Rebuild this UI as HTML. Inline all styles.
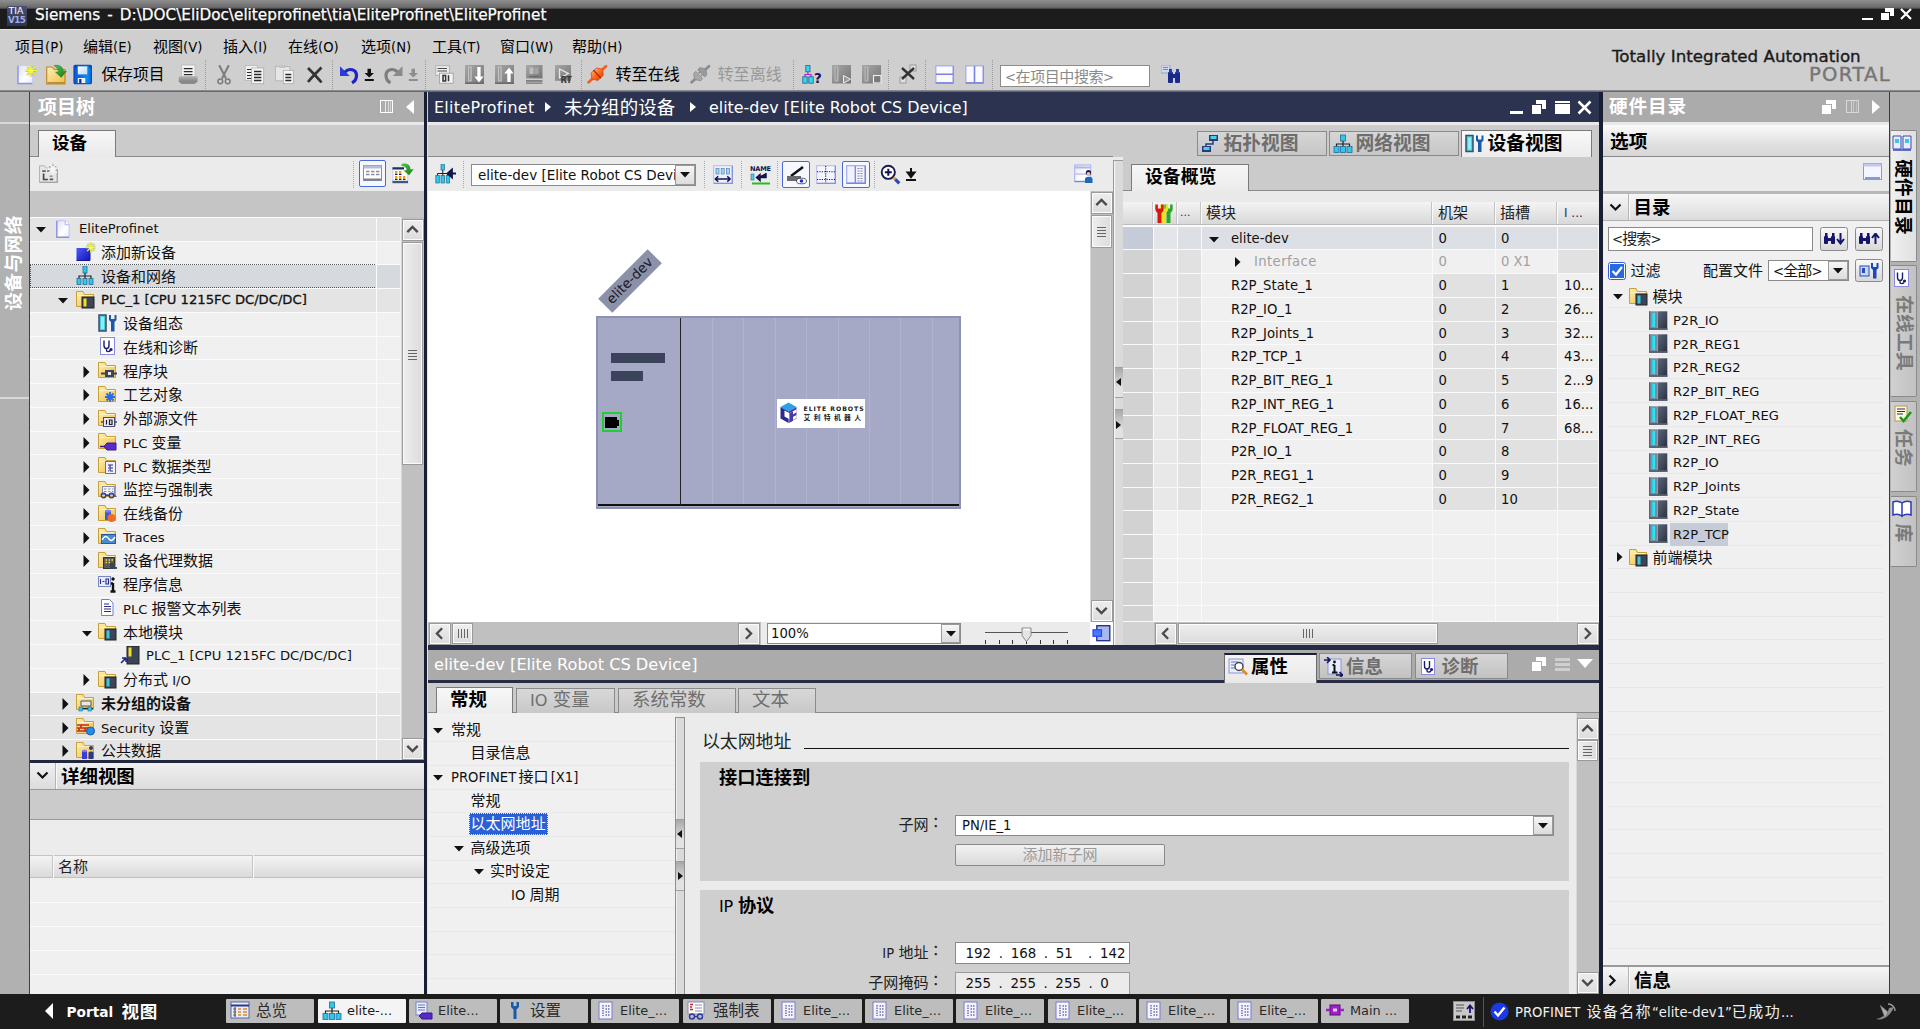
<!DOCTYPE html>
<html lang="zh-CN"><head><meta charset="utf-8"><title>Siemens - EliteProfinet</title>
<style>
html,body{margin:0;padding:0}
body{width:1920px;height:1029px;overflow:hidden;position:relative;background:#cfcfcf;
font-family:"DejaVu Sans","Liberation Sans","Noto Sans CJK SC",sans-serif;font-size:13.2px;color:#000}
div,svg{position:absolute;box-sizing:border-box}
.t{white-space:pre}
.c{font-size:1.14em}
span{position:static}
</style></head><body>
<svg width="0" height="0" style="left:0;top:0"><defs><linearGradient id="fg" x1="0" y1="0" x2="1" y2="1"><stop offset="0" stop-color="#fdeeb0"/><stop offset="1" stop-color="#efbf4a"/></linearGradient><linearGradient id="gg" x1="0" y1="0" x2="0" y2="1"><stop offset="0" stop-color="#b4b4b4"/><stop offset="1" stop-color="#7c7c7c"/></linearGradient><linearGradient id="bg" x1="0" y1="0" x2="1" y2="1"><stop offset="0" stop-color="#dfe0ff"/><stop offset=".6" stop-color="#ffffff"/><stop offset="1" stop-color="#e8e8ff"/></linearGradient><linearGradient id="gr" x1="0" y1="0" x2="1" y2="1"><stop offset="0" stop-color="#52c452"/><stop offset="1" stop-color="#167816"/></linearGradient><linearGradient id="sv" x1="0" y1="0" x2="1" y2="0"><stop offset="0" stop-color="#0a55d4"/><stop offset=".75" stop-color="#0a8cf0"/><stop offset="1" stop-color="#0a68dc"/></linearGradient><linearGradient id="sl" x1="0" y1="0" x2="1" y2="1"><stop offset="0" stop-color="#ffffff"/><stop offset="1" stop-color="#b8d8f4"/></linearGradient><linearGradient id="gg2" x1="0" y1="0" x2="1" y2="1"><stop offset="0" stop-color="#a8a8a8"/><stop offset="1" stop-color="#747474"/></linearGradient><linearGradient id="og" x1="0" y1="0" x2="0" y2="1"><stop offset="0" stop-color="#ffa060"/><stop offset=".5" stop-color="#ff6a1e"/><stop offset="1" stop-color="#e84a0a"/></linearGradient><linearGradient id="md" x1="0" y1="0" x2="1" y2="1"><stop offset="0" stop-color="#5c657a"/><stop offset="1" stop-color="#2a3140"/></linearGradient><linearGradient id="ad" x1="0" y1="0" x2="1" y2="1"><stop offset="0" stop-color="#4a5af8"/><stop offset="1" stop-color="#1414b8"/></linearGradient></defs></svg>

<div style="left:0px;top:0px;width:1920px;height:29px;background:linear-gradient(#8e8e8e 0,#808080 3px,#6c6c6c 7px,#565656 8.2px,#1c1c1c 9.4px,#1c1c1c 100%)"></div>
<div style="left:7px;top:6px;width:20px;height:20px;background:linear-gradient(#4a5072,#2c3350);overflow:hidden"></div>
<div class="t" style="left:8.5px;top:6.300000000000001px;height:10px;line-height:10px;font-size:9.3px;color:#fff;letter-spacing:0px">TIA</div>
<div class="t" style="left:8px;top:15.3px;height:10px;line-height:10px;font-size:8.8px;color:#9fb0e8;font-weight:bold;letter-spacing:-0.6px">V15</div>
<div class="t" style="left:35px;top:2.5px;height:24px;line-height:24px;font-size:15.25px;color:#fff;word-spacing:2.2px;-webkit-text-stroke:0.25px #fff">Siemens - D:\DOC\EliDoc\eliteprofinet\tia\EliteProfinet\EliteProfinet</div>
<div style="left:1862px;top:18px;width:11px;height:2px;background:#fff"></div>
<div style="left:1885px;top:8px;width:9px;height:8px;background:#fff"></div>
<div style="left:1881px;top:12px;width:9px;height:8px;background:#fff;border:1px solid #1c1c1c;border-width:1px 1px 0 0"></div>
<svg style="left:1900px;top:8px;" width="12" height="12" viewBox="0 0 12 12"><path d="M1 1 L11 11 M11 1 L1 11" stroke="#fff" stroke-width="2.2"/></svg>
<div style="left:0px;top:29px;width:1920px;height:1px;background:#e4e4e4"></div>
<div class="t" style="left:15px;top:34.8px;height:24px;line-height:24px;font-size:13.2px;color:#000;"><span class="c">项目</span>(P)</div>
<div class="t" style="left:83px;top:34.8px;height:24px;line-height:24px;font-size:13.2px;color:#000;"><span class="c">编辑</span>(E)</div>
<div class="t" style="left:153px;top:34.8px;height:24px;line-height:24px;font-size:13.2px;color:#000;"><span class="c">视图</span>(V)</div>
<div class="t" style="left:223px;top:34.8px;height:24px;line-height:24px;font-size:13.2px;color:#000;"><span class="c">插入</span>(I)</div>
<div class="t" style="left:288px;top:34.8px;height:24px;line-height:24px;font-size:13.2px;color:#000;"><span class="c">在线</span>(O)</div>
<div class="t" style="left:361px;top:34.8px;height:24px;line-height:24px;font-size:13.2px;color:#000;"><span class="c">选项</span>(N)</div>
<div class="t" style="left:432px;top:34.8px;height:24px;line-height:24px;font-size:13.2px;color:#000;"><span class="c">工具</span>(T)</div>
<div class="t" style="left:500px;top:34.8px;height:24px;line-height:24px;font-size:13.2px;color:#000;"><span class="c">窗口</span>(W)</div>
<div class="t" style="left:572px;top:34.8px;height:24px;line-height:24px;font-size:13.2px;color:#000;"><span class="c">帮助</span>(H)</div>
<div class="t" style="left:1612px;top:43.8px;height:24px;line-height:24px;font-size:16.7px;color:#1a1a1a;-webkit-text-stroke:0.35px #1a1a1a">Totally Integrated Automation</div>
<div class="t" style="left:1809px;top:62.5px;height:24px;line-height:24px;font-size:19.6px;color:#757575;letter-spacing:1.3px;-webkit-text-stroke:0.4px #757575">PORTAL</div>
<svg style="left:17px;top:64px;" width="20" height="21" viewBox="0 0 20 21"><path d="M1 1.500h14.500v18H1z" fill="url(#bg)"/><path d="M1 1.500v18h14.500" fill="none" stroke="#8c90ea" stroke-width="1.400"/><path d="M1 1.500h14.500v18" fill="none" stroke="#c4c8f8" stroke-width=".8"/><g stroke="#3a6ab0" stroke-width="2.200" opacity=".55"><path d="M14 1v11.500M8.300 6.800h11.400M10 2.700l8 8.200M18 2.700l-8 8.200"/></g><g stroke="#f6f63a" stroke-width="1.500"><path d="M14 .8v12M8 6.800h12M9.800 2.600l8.400 8.400M18.200 2.600l-8.400 8.400"/></g><circle cx="14" cy="6.800" r="2.300" fill="#f8f840"/></svg>
<svg style="left:46px;top:64px;" width="21" height="21" viewBox="0 0 21 21"><path d="M.7 3h5.500l2.300 2.500h10.500v14.300H.7z" fill="url(#fg)" stroke="#c08c2c" stroke-width="1.200"/><path d="M1.500 18.800h17" stroke="#b8842a" stroke-width="1.400"/><path d="M8 1.500c6-1 9 1.500 9.500 6l2.800-.3-5 6.200-5.800-5.200 3 -.3c-.3-2.500-1.700-4.500-4.500-6.400z" fill="url(#gr)" stroke="#1c7a1c" stroke-width=".5"/></svg>
<svg style="left:73px;top:64px;" width="20" height="21" viewBox="0 0 20 21"><rect x="1" y="1.200" width="17.400" height="18.600" rx="1" fill="url(#sv)" stroke="#0a44b0" stroke-width="1.100"/><rect x="4.800" y="2.400" width="9.500" height="8" fill="url(#sl)"/><rect x="4.800" y="14" width="7.500" height="5" fill="#eef0f8"/><rect x="6.200" y="15" width="2.200" height="4" fill="#0a2a90"/><rect x="2" y="2.200" width="1.200" height="1.200" fill="#062a70"/><rect x="16" y="2.200" width="1.200" height="1.200" fill="#062a70"/></svg>
<div class="t" style="left:101.5px;top:62.599999999999994px;height:24px;line-height:24px;font-size:13.85px;color:#000;"><span class="c">保存项目</span></div>
<svg style="left:178px;top:64px;" width="21" height="21" viewBox="0 0 21 21"><rect x="3.700" y="1" width="13.300" height="11.500" fill="#f4f4f4" stroke="#b8b8b8" stroke-width=".8"/><path d="M5.800 4.700h8.700M5.800 7.700h8.700M5.800 10.600h8.700" stroke="#2a2a2a" stroke-width="1.300"/><rect x=".8" y="12.200" width="18.700" height="6.300" rx="1" fill="url(#gg)"/><rect x="2.800" y="18.400" width="14.600" height="1.400" fill="#7a7a7a"/></svg>
<div style="left:205px;top:60px;width:1px;height:29px;border-left:1px dotted #9a9a9a"></div>
<svg style="left:215px;top:64px;" width="18" height="21" viewBox="0 0 18 21"><g stroke="#7c7c7c" fill="none"><path d="M4.200 1.200L11 14.500M13.800 1.200L7 14.500" stroke-width="2"/><circle cx="5.300" cy="17.300" r="2.400" stroke-width="1.500"/><circle cx="12.700" cy="17.300" r="2.400" stroke-width="1.500"/></g></svg>
<svg style="left:244px;top:64px;" width="21" height="21" viewBox="0 0 21 21"><rect x="1.200" y="1.400" width="12.300" height="15" fill="#f0f0f0" stroke="#b4b4b4" stroke-width=".8"/><path d="M3 5.500h5M3 8.500h5M3 11.500h5M3 14.500h5" stroke="#2a2a2a" stroke-width="1"/><rect x="7.700" y="4" width="12" height="15.700" fill="#f6f6f6" stroke="#aaa" stroke-width=".8"/><path d="M10 7.500h7.400M10 10.500h7.400M10 13.500h7.400M10 16.500h7.400" stroke="#2a2a2a" stroke-width="1.300"/></svg>
<svg style="left:274px;top:64px;" width="21" height="21" viewBox="0 0 21 21"><rect x="1.400" y="2.500" width="14.500" height="14.300" fill="#e6e6e6" stroke="#b0b0b0" stroke-width=".8"/><rect x="5" y="1" width="7" height="3" rx="1" fill="#c4c4c4"/><rect x="9.300" y="6.400" width="10" height="13.300" fill="#f6f6f6" stroke="#aaa" stroke-width=".8"/><path d="M11.300 10.500h6M11.300 13.500h6M11.300 16.500h6" stroke="#2a2a2a" stroke-width="1.300"/></svg>
<svg style="left:306px;top:65px;" width="18" height="19" viewBox="0 0 18 19"><path d="M2 3c4 4 9 9 13.500 14.500M15.500 2.500C11 7 6.500 11.500 2 17" stroke="#333" stroke-width="2.700" fill="none"/></svg>
<div style="left:332px;top:60px;width:1px;height:29px;border-left:1px dotted #9a9a9a"></div>
<svg style="left:339px;top:64px;" width="22" height="21" viewBox="0 0 22 21"><path d="M1 2.200v9.700h9.700z" fill="#2a3ae0"/><path d="M6 8c4-4.500 11.500-2.500 11.500 3.500 0 3.500-2 6-4.500 7.300" fill="none" stroke="#1c26c8" stroke-width="3.200"/></svg>
<svg style="left:364px;top:68px;" width="12" height="14" viewBox="0 0 12 14"><path d="M3.500 .8h3.500v4.200h3L5.250 9.500.500 5h3z" fill="#111"/><path d="M.8 12h9" stroke="#111" stroke-width="2"/></svg>
<svg style="left:383px;top:64px;" width="22" height="21" viewBox="0 0 22 21"><path d="M19.500 2.200v9.700H9.800z" fill="#8a8a8a"/><path d="M14.500 8C10.500 3.500 3 5.500 3 11.500c0 3.500 2 6 4.500 7.300" fill="none" stroke="#7e7e7e" stroke-width="3.200"/></svg>
<svg style="left:408px;top:68px;" width="12" height="14" viewBox="0 0 12 14"><path d="M3.500 .8h3.500v4.200h3L5.250 9.500.500 5h3z" fill="#8e8e8e"/><path d="M.8 12h9" stroke="#8e8e8e" stroke-width="2"/></svg>
<div style="left:425px;top:60px;width:1px;height:29px;border-left:1px dotted #9a9a9a"></div>
<svg style="left:435px;top:65px;" width="20" height="20" viewBox="0 0 20 20"><rect x=".8" y=".8" width="13.500" height="9.500" fill="#ededed" stroke="#a8a8a8" stroke-width=".8"/><path d="M2.500 3.500h9.500M2.500 6h9.500" stroke="#4a4a4a" stroke-width="1.200"/><rect x="4.500" y="8.200" width="13.700" height="10" fill="#f2f2f2" stroke="#9a9a9a" stroke-width=".8"/><path d="M8 10.500h2.600v5.500H8zM13.500 10.300v6" stroke="#333" fill="none" stroke-width="1.500"/></svg>
<svg style="left:465px;top:65px;" width="20" height="20" viewBox="0 0 20 20"><rect x="0" y="0" width="19" height="19" fill="url(#gg2)"/><rect x="3" y="1.500" width="3.700" height="15" fill="#c4c4c4"/><rect x="4" y="2.500" width="1.500" height="13" fill="#9c9c9c"/><path d="M12.300 2h3.300v9.500h3L14 17.500 9.300 11.500h3z" fill="#fff"/><rect x="0" y="17.500" width="19" height="1.500" fill="#6a6a6a"/></svg>
<svg style="left:495px;top:65px;" width="20" height="20" viewBox="0 0 20 20"><rect x="0" y="0" width="19" height="19" fill="url(#gg2)"/><rect x="3" y="1.500" width="3.700" height="15" fill="#c4c4c4"/><rect x="4" y="2.500" width="1.500" height="13" fill="#9c9c9c"/><path d="M12.300 17h3.300V8.500h3L14 2.500 9.300 8.500h3z" fill="#fff"/><rect x="0" y="17.500" width="19" height="1.500" fill="#6a6a6a"/></svg>
<svg style="left:526px;top:65px;" width="18" height="20" viewBox="0 0 18 20"><rect x="0" y="0" width="16.500" height="13.500" fill="url(#gg2)"/><rect x="3.500" y="2.500" width="4" height="6.500" fill="#bdbdbd"/><rect x="8.500" y="2.500" width="4" height="6.500" fill="#a4a4a4"/><rect x="3" y="11" width="10" height="1.200" fill="#6a6a6a"/><rect x="0" y="15" width="16.500" height="1.800" fill="#7e7e7e"/><rect x="0" y="17.300" width="16.500" height="1.700" fill="#8c8c8c"/></svg>
<svg style="left:555px;top:65px;" width="19" height="20" viewBox="0 0 19 20"><rect x="0" y="0" width="16" height="15.800" fill="url(#gg2)"/><path d="M4.500 4l9 4.600-9 4.400z" fill="none" stroke="#e6e6e6" stroke-width="1.300"/></svg>
<div class="t" style="left:560.5px;top:76.0px;height:9px;line-height:9px;font-size:8.2px;color:#3a3a3a;font-weight:bold;letter-spacing:-0.3px">RT</div>
<div style="left:581px;top:60px;width:1px;height:29px;border-left:1px dotted #9a9a9a"></div>
<svg style="left:587px;top:64px;" width="21" height="21" viewBox="0 0 21 21"><g transform="rotate(-43 10.200 10.200)"><rect x="-3" y="8.900" width="26.500" height="2.800" rx="1.400" fill="#f2601a"/><path d="M3 10.200l3.500-5h7.500l3.500 5-3.500 5H6.500z" fill="url(#og)" stroke="#d8480c" stroke-width=".7"/><path d="M10.200 4.700v11" stroke="#a01808" stroke-width="1.100"/></g></svg>
<div class="t" style="left:615.5px;top:63.0px;height:24px;line-height:24px;font-size:14.1px;color:#000;"><span class="c">转至在线</span></div>
<svg style="left:690px;top:64px;" width="21" height="21" viewBox="0 0 21 21"><g transform="rotate(-43 10.200 10.200)"><rect x="-3" y="8.900" width="8" height="2.800" rx="1.400" fill="#8c8c8c"/><rect x="15.500" y="8.900" width="8" height="2.800" rx="1.400" fill="#8c8c8c"/><path d="M2.500 10.200l3.500-5h3v10h-3z" fill="#a8a8a8" stroke="#868686" stroke-width=".7"/><path d="M18 10.200l-3.500-5h-3v10h3z" fill="#9a9a9a" stroke="#868686" stroke-width=".7"/><path d="M9.500 8.500h2M9.500 12h2" stroke="#777" stroke-width="1"/></g></svg>
<div class="t" style="left:717.5px;top:63.0px;height:24px;line-height:24px;font-size:14.1px;color:#989898;"><span class="c">转至离线</span></div>
<div style="left:793px;top:60px;width:1px;height:29px;border-left:1px dotted #9a9a9a"></div>
<svg style="left:802px;top:64px;" width="21" height="21" viewBox="0 0 21 21"><rect x="3.800" y="1.600" width="4.200" height="6.200" fill="#30d8f0" stroke="#285a8a" stroke-width=".8"/><path d="M5.900 8v2.500M3 13v-2.500h6v2.500" stroke="#b020d0" fill="none" stroke-width="1.200"/><rect x=".8" y="12.800" width="4.400" height="6.400" fill="#30d8f0" stroke="#285a8a" stroke-width=".8"/><rect x="6.800" y="12.800" width="4.400" height="6.400" fill="#30d8f0" stroke="#285a8a" stroke-width=".8"/></svg>
<div class="t" style="left:814px;top:70.5px;height:14px;line-height:14px;font-size:13.5px;color:#14145a;font-weight:bold;">?</div>
<svg style="left:832px;top:65px;" width="21" height="20" viewBox="0 0 21 20"><rect x="0" y="0" width="19" height="18.500" fill="url(#gg2)"/><rect x="2.500" y="1.500" width="4" height="15" fill="#b8b8b8"/><rect x="3.600" y="2.500" width="1.500" height="13" fill="#989898"/><path d="M11.500 10.500l7 3.700-7 3.800z" fill="#9a9a9a" stroke="#ececec" stroke-width="1"/></svg>
<svg style="left:862px;top:65px;" width="21" height="20" viewBox="0 0 21 20"><rect x="0" y="0" width="19" height="18.500" fill="url(#gg2)"/><rect x="2.500" y="1.500" width="4" height="15" fill="#b8b8b8"/><rect x="3.600" y="2.500" width="1.500" height="13" fill="#989898"/><rect x="11.500" y="10.500" width="7.500" height="7.500" fill="#7a7a7a" stroke="#ececec" stroke-width="1.200"/></svg>
<div style="left:888px;top:60px;width:1px;height:29px;border-left:1px dotted #9a9a9a"></div>
<svg style="left:899px;top:64px;" width="20" height="20" viewBox="0 0 20 20"><rect x="11" y="1" width="6" height="6" fill="#e0e0e0" stroke="#9a9a9a"/><rect x="1" y="13" width="6" height="6" fill="#e0e0e0" stroke="#9a9a9a"/><path d="M3 4l12 11M15 4L3 15" stroke="#333" stroke-width="2.400"/></svg>
<div style="left:925px;top:60px;width:1px;height:29px;border-left:1px dotted #9a9a9a"></div>
<svg style="left:935px;top:65px;" width="20" height="20" viewBox="0 0 20 20"><rect x=".8" y=".8" width="17.400" height="17" fill="#fbfbff" stroke="#a8acf0" stroke-width="1.300"/><path d="M1 9.300h17M.8 18h17.600" stroke="#7a80e0" stroke-width="1.600"/><path d="M18.400 1v17" stroke="#8a90e8" stroke-width="1.200"/></svg>
<svg style="left:965px;top:65px;" width="20" height="20" viewBox="0 0 20 20"><rect x=".8" y=".8" width="17.400" height="17" fill="#fbfbff" stroke="#a8acf0" stroke-width="1.300"/><path d="M9.500 1v17M.8 18h17.600" stroke="#7a80e0" stroke-width="1.600"/><path d="M18.400 1v17" stroke="#8a90e8" stroke-width="1.200"/></svg>
<div style="left:992px;top:60px;width:1px;height:29px;border-left:1px dotted #9a9a9a"></div>
<div style="left:1000px;top:65px;width:150px;height:22px;background:#fff;border:1px solid #8c8c8c"></div>
<div class="t" style="left:1005px;top:64.5px;height:24px;line-height:24px;font-size:13.2px;color:#8a8a8a;letter-spacing:-0.45px">&lt;<span class="c">在项目中搜索</span>&gt;</div>
<svg style="left:1161px;top:65px;" width="20" height="19" viewBox="0 0 20 19"><rect x="0" y="0" width="9" height="8" fill="#d0d8f0" stroke="#8a96c8" stroke-width=".8"/><path d="M2 2.500h5M2 4.500h5" stroke="#7a86b8"/><rect x="7" y="7" width="5" height="11" rx="1" fill="#1a2a8a"/><rect x="14" y="7" width="5" height="11" rx="1" fill="#1a2a8a"/><rect x="11" y="9" width="4" height="4" fill="#1a2a8a"/><rect x="8" y="4" width="3" height="4" fill="#2a3aa0"/><rect x="15" y="4" width="3" height="4" fill="#2a3aa0"/></svg>
<div style="left:0px;top:90px;width:1920px;height:2px;background:linear-gradient(#9a9a9a,#55596a)"></div>
<div style="left:0px;top:92px;width:29px;height:902px;background:#b1b1b1"></div>
<div style="left:0px;top:122px;width:29px;height:2px;background:#d8d8d8"></div>
<div style="left:0px;top:397px;width:29px;height:2px;background:#d8d8d8"></div>
<div style="left:29px;top:92px;width:1px;height:902px;background:#3a3f55"></div>
<div class="t" style="left:-36px;top:252px;width:100px;height:22px;line-height:22px;transform:rotate(-90deg);font-size:16.4px;color:#fff;font-weight:bold;text-align:center;letter-spacing:0.4px"><span class="c">设备与网络</span></div>
<div style="left:30px;top:92px;width:394px;height:30px;background:#adadad"></div>
<div class="t" style="left:38px;top:95.0px;height:24px;line-height:24px;font-size:16.7px;color:#fff;font-weight:bold;"><span class="c">项目树</span></div>
<div style="left:380px;top:100px;width:13px;height:13px;border:1.500px solid #fff;background:linear-gradient(90deg,transparent 0 4px,#e8e8e8 4px 5px,transparent 5px 6.500px,#dcdcdc 6.500px 7.500px,transparent 7.500px 9px,#d0d0d0 9px 10px,transparent 10px)"></div>
<svg style="left:405px;top:99px;" width="10" height="16" viewBox="0 0 10 16"><path d="M9 1v14L1 8z" fill="#fff"/></svg>
<div style="left:30px;top:122px;width:394px;height:3px;background:#e9e9e9"></div>
<div style="left:30px;top:125px;width:394px;height:32px;background:#cbcbcb"></div>
<div style="left:30px;top:156px;width:394px;height:1px;background:#8a8a8a"></div>
<div style="left:38px;top:130px;width:78px;height:27px;background:linear-gradient(#f6f6f6,#e9e9e9);border:1px solid #7a7a7a;border-bottom:none"></div>
<div class="t" style="left:52px;top:131.0px;height:24px;line-height:24px;font-size:15.4px;color:#000;font-weight:bold;"><span class="c">设备</span></div>
<div style="left:30px;top:157px;width:394px;height:34px;background:#ebebeb"></div>
<svg style="left:38px;top:163px;" width="22" height="21" viewBox="0 0 22 21"><path d="M1.500 2.800h5l1.800 2.200h11v14.300H1.500z" fill="#e6e6e6" stroke="#b4b4b4"/><path d="M1.500 19.300h17.800V5" fill="none" stroke="#a4a4a4" stroke-width="1.300"/><rect x="4.200" y="7.300" width="3.600" height="1.600" fill="#555"/><rect x="9" y="7.300" width="3" height="1.600" fill="#777"/><path d="M5.600 10.500v6h4.300" stroke="#444" stroke-width="1.700" fill="none"/><rect x="11.600" y="15.500" width="3.600" height="1.700" fill="#555"/><rect x="11.600" y="12.500" width="3" height="1.400" fill="#888"/><g stroke="#f6f6f6" stroke-width="1.600"><path d="M15 .5v11M9.800 6h10.400M11.300 2.300l7.400 7.400M18.700 2.300l-7.400 7.400"/></g><g stroke="#8c8c8c" stroke-width=".9"><path d="M15 .8v2.500M18.300 2.700l-1.500 1.500M11 3.200l1.800 1.200M19.800 6.500l-2.300 1"/></g></svg>
<div style="left:353px;top:161px;width:1px;height:27px;border-left:1px dotted #aaaaaa"></div>
<div style="left:359px;top:160px;width:27px;height:27px;background:#f6f8ff;border:1.500px solid #4a68d8;border-radius:2px"></div>
<svg style="left:363px;top:165px;" width="19" height="17" viewBox="0 0 19 17"><rect x=".5" y=".5" width="18" height="15" fill="#fff" stroke="#8a8aa8"/><rect x=".5" y=".5" width="18" height="3" fill="#b8bcd8"/><path d="M3 6.500h3.500M8 6.500h3.500M13 6.500h3.500M3 9.500h3.500M8 9.500h3.500M13 9.500h3.500" stroke="#8a8aa8" stroke-width="1.400"/><path d="M1 14.500h17" stroke="#7a7a9a" stroke-width="2"/></svg>
<svg style="left:392px;top:163px;" width="23" height="22" viewBox="0 0 23 22"><rect x=".8" y="4.500" width="15" height="15" fill="#fff" stroke="#c4ccec" stroke-width="1"/><rect x=".5" y="4.300" width="11.500" height="2.200" fill="#143468"/><rect x=".5" y="17.800" width="15.500" height="2.400" fill="#3a5a84"/><g fill="#f59a1e"><rect x="3" y="8" width="2.400" height="3.600"/><rect x="7" y="8" width="2.400" height="3.600"/><rect x="3" y="13" width="2.400" height="3.600"/><rect x="7" y="13" width="2.400" height="3.600"/><rect x="11" y="13" width="2.400" height="3.600"/></g><g fill="#1a1a5a"><rect x="3" y="11" width="2.400" height="1"/><rect x="7" y="11" width="2.400" height="1"/><rect x="3" y="16" width="2.400" height="1"/><rect x="7" y="16" width="2.400" height="1"/><rect x="11" y="16" width="2.400" height="1"/></g><path d="M9.500 1c5.500-1.500 9 1 9 5.500l3.200-.5-4.700 6.300-5.500-4.800 3 -.4c0-2.500-1.500-4-5-4z" fill="url(#gr)"/></svg>
<div style="left:30px;top:191px;width:394px;height:26px;background:#c5c5c5"></div>
<div class="tree" style="left:30px;top:217px;width:394px;height:543px;background:#f0f0f0;overflow:hidden"></div>
<div style="left:30px;top:217px;width:370px;height:24px;background:#e4e4e4;border-top:1px solid #fbfbfb"></div>
<svg style="left:36px;top:226px;" width="10" height="7" viewBox="0 0 10 7"><path d="M0 1h10L5 6.500z" fill="#111"/></svg>
<svg style="left:54px;top:219px;" width="20" height="20" viewBox="0 0 20 20"><path d="M2.800 1.800h8.400l4 4v12.400H2.800z" fill="url(#bg)"/><path d="M2.800 1.800v16.400h12.400" fill="none" stroke="#8a8ee6" stroke-width="1.400"/><path d="M2.800 1.800h8.400l4 4v12.400" fill="none" stroke="#b8bcf4" stroke-width=".9"/><path d="M11.200 1.800v4h4" fill="#fff" stroke="#a4a8ee" stroke-width=".9"/></svg>
<div class="t" style="left:79px;top:217.26500000000001px;height:24px;line-height:24px;font-size:13.15px;color:#111;">EliteProfinet</div>
<div style="left:30px;top:241px;width:370px;height:23px;background:#f0f0f0;border-top:1px solid #fbfbfb"></div>
<svg style="left:76px;top:242px;" width="20" height="20" viewBox="0 0 20 20"><rect x=".5" y="6" width="13.500" height="12.500" fill="url(#ad)"/><path d="M.5 18.500h13.500V9" fill="none" stroke="#1414a0" stroke-width="1"/><g stroke="#3a6ab0" stroke-width="2" opacity=".5"><path d="M14.800 .5v10M9.800 5.500h10M11.300 2l7 7M18.300 2l-7 7"/></g><g stroke="#f6f63a" stroke-width="1.300"><path d="M14.800 .3v10.400M9.600 5.500h10.400M11.200 1.900l7.200 7.200M18.400 1.900l-7.200 7.200"/></g><circle cx="14.800" cy="5.500" r="2" fill="#f8f840"/></svg>
<div class="t" style="left:101px;top:240.995px;height:24px;line-height:24px;font-size:13.15px;color:#111;"><span class="c">添加新设备</span></div>
<div style="left:30px;top:264px;width:370px;height:24px;background:#d6dade;border-top:1px solid #fbfbfb"></div>
<div style="left:30px;top:264px;width:347px;height:24px;border:1px dotted #555"></div>
<svg style="left:76px;top:266px;" width="20" height="20" viewBox="0 0 20 20"><rect x="7" y="0" width="4" height="7" fill="#30c8e8" stroke="#286a9a" stroke-width=".8"/><path d="M9 7v3M3 13v-3h12v3M9 10v3" stroke="#222" fill="none" stroke-width="1.200"/><rect x="1" y="12.500" width="4" height="6" fill="#30c8e8" stroke="#286a9a" stroke-width=".8"/><rect x="7" y="12.500" width="4" height="6" fill="#30c8e8" stroke="#286a9a" stroke-width=".8"/><rect x="13" y="12.500" width="4" height="6" fill="#30c8e8" stroke="#286a9a" stroke-width=".8"/></svg>
<div class="t" style="left:101px;top:264.72499999999997px;height:24px;line-height:24px;font-size:13.15px;color:#111;"><span class="c">设备和网络</span></div>
<div style="left:30px;top:288px;width:370px;height:24px;background:#e4e4e4;border-top:1px solid #fbfbfb"></div>
<svg style="left:58px;top:297px;" width="10" height="7" viewBox="0 0 10 7"><path d="M0 1h10L5 6.500z" fill="#111"/></svg>
<svg style="left:76px;top:290px;" width="20" height="20" viewBox="0 0 20 20"><path d="M.5 1.500h6.500l1.500 3h9v12H.5z" fill="url(#fg)" stroke="#c9a038"/><path d="M1.500 5.500h15" stroke="#fff3c4" stroke-width="1"/><rect x="6" y="7" width="12" height="11" fill="#3c4458" stroke="#222"/><rect x="7.500" y="8.500" width="3" height="8" fill="#f0e020"/></svg>
<div class="t" style="left:101px;top:288.455px;height:24px;line-height:24px;font-size:13.15px;color:#111;-webkit-text-stroke:0.3px #111">PLC_1 [CPU 1215FC DC/DC/DC]</div>
<div style="left:30px;top:312px;width:370px;height:24px;background:#f0f0f0;border-top:1px solid #fbfbfb"></div>
<svg style="left:98px;top:314px;" width="20" height="20" viewBox="0 0 20 20"><rect x="1" y="1" width="7" height="16" fill="#48d0e0" stroke="#3a4a6a" stroke-width="1.500"/><rect x="3" y="3" width="3" height="12" fill="#8af0f8"/><path d="M11 1v5l2 2v9.500h3.500V8l2-2V1l-2 .0v4h-3.500V1z" fill="#1a5aa8"/></svg>
<div class="t" style="left:123px;top:312.185px;height:24px;line-height:24px;font-size:13.15px;color:#111;"><span class="c">设备组态</span></div>
<div style="left:30px;top:336px;width:370px;height:23px;background:#f0f0f0;border-top:1px solid #fbfbfb"></div>
<svg style="left:98px;top:337px;" width="20" height="20" viewBox="0 0 20 20"><rect x="2.500" y=".5" width="14" height="17" fill="#fff" stroke="#8a8ae0"/><path d="M6 3.500v5c0 2 1 3 2.500 3s2.500-1 2.500-3v-5M8.500 11.500v2c0 1.500 3 1.500 4 0" stroke="#1a1a6a" fill="none" stroke-width="1.400"/><circle cx="13" cy="12.500" r="1.600" fill="#1a1a6a"/></svg>
<div class="t" style="left:123px;top:335.91499999999996px;height:24px;line-height:24px;font-size:13.15px;color:#111;"><span class="c">在线和诊断</span></div>
<div style="left:30px;top:359px;width:370px;height:24px;background:#f0f0f0;border-top:1px solid #fbfbfb"></div>
<svg style="left:83px;top:366px;" width="7" height="12" viewBox="0 0 7 12"><path d="M.5 0l6 6-6 6z" fill="#111"/></svg>
<svg style="left:98px;top:361px;" width="20" height="20" viewBox="0 0 20 20"><path d="M.5 1.500h6.500l1.500 3h9v12H.5z" fill="url(#fg)" stroke="#c9a038"/><path d="M1.500 5.500h15" stroke="#fff3c4" stroke-width="1"/><rect x="7" y="9" width="9" height="7" fill="#3c4458"/><path d="M3 12.500h4M16 12.500h3" stroke="#3c4458" stroke-width="2"/><rect x="10" y="11" width="3" height="3" fill="#e8e8e8"/></svg>
<div class="t" style="left:123px;top:359.645px;height:24px;line-height:24px;font-size:13.15px;color:#111;"><span class="c">程序块</span></div>
<div style="left:30px;top:383px;width:370px;height:24px;background:#f0f0f0;border-top:1px solid #fbfbfb"></div>
<svg style="left:83px;top:389px;" width="7" height="12" viewBox="0 0 7 12"><path d="M.5 0l6 6-6 6z" fill="#111"/></svg>
<svg style="left:98px;top:385px;" width="20" height="20" viewBox="0 0 20 20"><path d="M.5 1.500h6.500l1.500 3h9v12H.5z" fill="url(#fg)" stroke="#c9a038"/><path d="M1.500 5.500h15" stroke="#fff3c4" stroke-width="1"/><g stroke="#2a6ae8" stroke-width="1.800"><path d="M12 7v10M7 12h10M8.500 8.500l7 7M15.500 8.500l-7 7"/></g></svg>
<div class="t" style="left:123px;top:383.375px;height:24px;line-height:24px;font-size:13.15px;color:#111;"><span class="c">工艺对象</span></div>
<div style="left:30px;top:407px;width:370px;height:24px;background:#f0f0f0;border-top:1px solid #fbfbfb"></div>
<svg style="left:83px;top:413px;" width="7" height="12" viewBox="0 0 7 12"><path d="M.5 0l6 6-6 6z" fill="#111"/></svg>
<svg style="left:98px;top:409px;" width="20" height="20" viewBox="0 0 20 20"><path d="M.5 1.500h6.500l1.500 3h9v12H.5z" fill="url(#fg)" stroke="#c9a038"/><path d="M1.500 5.500h15" stroke="#fff3c4" stroke-width="1"/><rect x="5.500" y="8.500" width="11" height="9" fill="#e8e8f4" stroke="#4a4a7a"/><path d="M8.500 11v4.500M11.500 11h2.500v4.500h-2.500z" stroke="#222" fill="none" stroke-width="1.200"/><path d="M3 13h2.500M16.500 13h2.500" stroke="#4a4a7a" stroke-width="1.500"/></svg>
<div class="t" style="left:123px;top:407.105px;height:24px;line-height:24px;font-size:13.15px;color:#111;"><span class="c">外部源文件</span></div>
<div style="left:30px;top:431px;width:370px;height:23px;background:#f0f0f0;border-top:1px solid #fbfbfb"></div>
<svg style="left:83px;top:437px;" width="7" height="12" viewBox="0 0 7 12"><path d="M.5 0l6 6-6 6z" fill="#111"/></svg>
<svg style="left:98px;top:432px;" width="20" height="20" viewBox="0 0 20 20"><path d="M.5 1.500h6.500l1.500 3h9v12H.5z" fill="url(#fg)" stroke="#c9a038"/><path d="M1.500 5.500h15" stroke="#fff3c4" stroke-width="1"/><path d="M9 11h9v7H9l-3-3.500z" fill="#5a2ac8" stroke="#3a1a8a"/><path d="M2 14.500h5" stroke="#3a1a8a" stroke-width="1.500"/></svg>
<div class="t" style="left:123px;top:430.835px;height:24px;line-height:24px;font-size:13.15px;color:#111;">PLC <span class="c">变量</span></div>
<div style="left:30px;top:454px;width:370px;height:24px;background:#f0f0f0;border-top:1px solid #fbfbfb"></div>
<svg style="left:83px;top:461px;" width="7" height="12" viewBox="0 0 7 12"><path d="M.5 0l6 6-6 6z" fill="#111"/></svg>
<svg style="left:98px;top:456px;" width="20" height="20" viewBox="0 0 20 20"><path d="M.5 1.500h6.500l1.500 3h9v12H.5z" fill="url(#fg)" stroke="#c9a038"/><path d="M1.500 5.500h15" stroke="#fff3c4" stroke-width="1"/><rect x="7.500" y="5.500" width="10" height="12" fill="#f0f0ff" stroke="#6a6ab0"/><path d="M10 9h5M12 9v6M12 12h3M12 15h3M10 12h1M10 15h1" stroke="#2a2a8a" stroke-width="1.100" fill="none"/></svg>
<div class="t" style="left:123px;top:454.565px;height:24px;line-height:24px;font-size:13.15px;color:#111;">PLC <span class="c">数据类型</span></div>
<div style="left:30px;top:478px;width:370px;height:24px;background:#f0f0f0;border-top:1px solid #fbfbfb"></div>
<svg style="left:83px;top:484px;" width="7" height="12" viewBox="0 0 7 12"><path d="M.5 0l6 6-6 6z" fill="#111"/></svg>
<svg style="left:98px;top:480px;" width="20" height="20" viewBox="0 0 20 20"><path d="M.5 1.500h6.500l1.500 3h9v12H.5z" fill="url(#fg)" stroke="#c9a038"/><path d="M1.500 5.500h15" stroke="#fff3c4" stroke-width="1"/><rect x="4.500" y="6.500" width="12" height="8" fill="#f4f4ff" stroke="#8a8ab0"/><path d="M6 9h2.500M10 9h2.500M14 9h1.500M6 11.500h2.500M10 11.500h2.500M14 11.500h1.500" stroke="#8a8ab0"/><circle cx="5.500" cy="15.500" r="2.300" fill="none" stroke="#2a3a9a" stroke-width="1.300"/><circle cx="13.500" cy="15.500" r="2.300" fill="none" stroke="#2a3a9a" stroke-width="1.300"/><path d="M7.500 15.500h4M15.500 15.500l3 1" stroke="#2a3a9a" stroke-width="1.200"/></svg>
<div class="t" style="left:123px;top:478.295px;height:24px;line-height:24px;font-size:13.15px;color:#111;"><span class="c">监控与强制表</span></div>
<div style="left:30px;top:502px;width:370px;height:23px;background:#f0f0f0;border-top:1px solid #fbfbfb"></div>
<svg style="left:83px;top:508px;" width="7" height="12" viewBox="0 0 7 12"><path d="M.5 0l6 6-6 6z" fill="#111"/></svg>
<svg style="left:98px;top:504px;" width="20" height="20" viewBox="0 0 20 20"><path d="M.5 1.500h6.500l1.500 3h9v12H.5z" fill="url(#fg)" stroke="#c9a038"/><path d="M1.500 5.500h15" stroke="#fff3c4" stroke-width="1"/><path d="M7 7h6v9H7z" fill="#3a5ad8"/><ellipse cx="10" cy="7" rx="3" ry="1.500" fill="#6a8af0"/><circle cx="13.500" cy="14" r="4" fill="#f06a2a"/></svg>
<div class="t" style="left:123px;top:502.025px;height:24px;line-height:24px;font-size:13.15px;color:#111;"><span class="c">在线备份</span></div>
<div style="left:30px;top:525px;width:370px;height:24px;background:#f0f0f0;border-top:1px solid #fbfbfb"></div>
<svg style="left:83px;top:532px;" width="7" height="12" viewBox="0 0 7 12"><path d="M.5 0l6 6-6 6z" fill="#111"/></svg>
<svg style="left:98px;top:527px;" width="20" height="20" viewBox="0 0 20 20"><path d="M.5 1.500h6.500l1.500 3h9v12H.5z" fill="url(#fg)" stroke="#c9a038"/><path d="M1.500 5.500h15" stroke="#fff3c4" stroke-width="1"/><rect x="3.500" y="7.500" width="14" height="9" fill="#4a8ad0" stroke="#2a5a9a"/><path d="M4 13c3-5 5-4 7-1s4 1 6-2" stroke="#fff" fill="none" stroke-width="1.400"/></svg>
<div class="t" style="left:123px;top:525.755px;height:24px;line-height:24px;font-size:13.15px;color:#111;">Traces</div>
<div style="left:30px;top:549px;width:370px;height:24px;background:#f0f0f0;border-top:1px solid #fbfbfb"></div>
<svg style="left:83px;top:555px;" width="7" height="12" viewBox="0 0 7 12"><path d="M.5 0l6 6-6 6z" fill="#111"/></svg>
<svg style="left:98px;top:551px;" width="20" height="20" viewBox="0 0 20 20"><path d="M.5 1.500h6.500l1.500 3h9v12H.5z" fill="url(#fg)" stroke="#c9a038"/><path d="M1.500 5.500h15" stroke="#fff3c4" stroke-width="1"/><rect x="5.500" y="6.500" width="11" height="11" fill="#5a5a5a" stroke="#333"/><path d="M7.500 9h1.500M10.500 9h1.500M13.500 9h1.500M7.500 11.500h1.500M10.500 11.500h1.500" stroke="#f0e040" stroke-width="1.500"/><rect x="12" y="12" width="5" height="6" fill="#3c4458"/><circle cx="18" cy="17" r="1" fill="#222"/></svg>
<div class="t" style="left:123px;top:549.485px;height:24px;line-height:24px;font-size:13.15px;color:#111;"><span class="c">设备代理数据</span></div>
<div style="left:30px;top:573px;width:370px;height:24px;background:#f0f0f0;border-top:1px solid #fbfbfb"></div>
<svg style="left:98px;top:575px;" width="20" height="20" viewBox="0 0 20 20"><rect x=".5" y="1.500" width="12" height="10" fill="#e8ecff" stroke="#7a86c8"/><path d="M2.500 4v5M4.500 6.500h2M8 4h2.500v5H8z" stroke="#2a2a7a" fill="none" stroke-width="1.100"/><path d="M15 8v8M12.500 16.500h5M13 8.500h2" stroke="#111" stroke-width="2.400"/><circle cx="15" cy="4" r="1.700" fill="#111"/></svg>
<div class="t" style="left:123px;top:573.215px;height:24px;line-height:24px;font-size:13.15px;color:#111;"><span class="c">程序信息</span></div>
<div style="left:30px;top:597px;width:370px;height:23px;background:#f0f0f0;border-top:1px solid #fbfbfb"></div>
<svg style="left:98px;top:598px;" width="20" height="20" viewBox="0 0 20 20"><path d="M3.500 1.500h8l3.500 3.500v12.500h-11.500z" fill="#fff" stroke="#7a7ad0"/><path d="M6 6h5M6 8.500h7M6 11h7M6 13.500h7" stroke="#2a2a8a" stroke-width="1.200"/></svg>
<div class="t" style="left:123px;top:596.945px;height:24px;line-height:24px;font-size:13.15px;color:#111;">PLC <span class="c">报警文本列表</span></div>
<div style="left:30px;top:620px;width:370px;height:24px;background:#f0f0f0;border-top:1px solid #fbfbfb"></div>
<svg style="left:81.5px;top:630px;" width="10" height="7" viewBox="0 0 10 7"><path d="M0 1h10L5 6.500z" fill="#111"/></svg>
<svg style="left:98px;top:622px;" width="20" height="20" viewBox="0 0 20 20"><path d="M.5 1.500h6.500l1.500 3h9v12H.5z" fill="url(#fg)" stroke="#c9a038"/><path d="M1.500 5.500h15" stroke="#fff3c4" stroke-width="1"/><rect x="7" y="7" width="11" height="11" fill="#3c4458" stroke="#222"/><rect x="8.500" y="8.500" width="3" height="8" fill="#38c8e0"/></svg>
<div class="t" style="left:123px;top:620.6750000000001px;height:24px;line-height:24px;font-size:13.15px;color:#111;"><span class="c">本地模块</span></div>
<div style="left:30px;top:644px;width:370px;height:24px;background:#f0f0f0;border-top:1px solid #fbfbfb"></div>
<svg style="left:120px;top:646px;" width="20" height="20" viewBox="0 0 20 20"><rect x="7" y="0" width="12" height="18" fill="#3c4458" stroke="#222"/><rect x="8.500" y="1.500" width="3" height="9" fill="#f0e020"/><path d="M1 17l5-5M6 12v4M6 12H2" stroke="#1a1a8a" stroke-width="1.500" fill="none"/></svg>
<div class="t" style="left:146px;top:644.405px;height:24px;line-height:24px;font-size:13.15px;color:#111;">PLC_1 [CPU 1215FC DC/DC/DC]</div>
<div style="left:30px;top:668px;width:370px;height:24px;background:#f0f0f0;border-top:1px solid #fbfbfb"></div>
<svg style="left:83px;top:674px;" width="7" height="12" viewBox="0 0 7 12"><path d="M.5 0l6 6-6 6z" fill="#111"/></svg>
<svg style="left:98px;top:670px;" width="20" height="20" viewBox="0 0 20 20"><path d="M.5 1.500h6.500l1.500 3h9v12H.5z" fill="url(#fg)" stroke="#c9a038"/><path d="M1.500 5.500h15" stroke="#fff3c4" stroke-width="1"/><rect x="7" y="7" width="11" height="11" fill="#3c4458" stroke="#222"/><rect x="8.500" y="8.500" width="3" height="8" fill="#38c8e0"/></svg>
<div class="t" style="left:123px;top:668.135px;height:24px;line-height:24px;font-size:13.15px;color:#111;"><span class="c">分布式</span> I/O</div>
<div style="left:30px;top:692px;width:370px;height:23px;background:#e4e4e4;border-top:1px solid #fbfbfb"></div>
<svg style="left:61.5px;top:698px;" width="7" height="12" viewBox="0 0 7 12"><path d="M.5 0l6 6-6 6z" fill="#111"/></svg>
<svg style="left:76px;top:693px;" width="20" height="20" viewBox="0 0 20 20"><path d="M.5 1.500h6.500l1.500 3h9v12H.5z" fill="url(#fg)" stroke="#c9a038"/><path d="M1.500 5.500h15" stroke="#fff3c4" stroke-width="1"/><path d="M5 8h10v5H5z" fill="#e8e8e8" stroke="#555"/><path d="M3 15.500h14" stroke="#222" stroke-width="1.300"/><rect x="3" y="14" width="3.500" height="4" fill="#30c8e8" stroke="#286a9a" stroke-width=".6"/><rect x="12" y="14" width="3.500" height="4" fill="#30c8e8" stroke="#286a9a" stroke-width=".6"/></svg>
<div class="t" style="left:101px;top:691.865px;height:24px;line-height:24px;font-size:13.15px;color:#111;font-weight:bold;"><span class="c">未分组的设备</span></div>
<div style="left:30px;top:715px;width:370px;height:24px;background:#e4e4e4;border-top:1px solid #fbfbfb"></div>
<svg style="left:61.5px;top:722px;" width="7" height="12" viewBox="0 0 7 12"><path d="M.5 0l6 6-6 6z" fill="#111"/></svg>
<svg style="left:76px;top:717px;" width="20" height="20" viewBox="0 0 20 20"><path d="M.5 1.500h6.500l1.500 3h9v12H.5z" fill="url(#fg)" stroke="#c9a038"/><path d="M1.500 5.500h15" stroke="#fff3c4" stroke-width="1"/><path d="M1 8h12M1 11h12M1 14h12M5 8v3M9 11v3M3 11v3" stroke="#c82a1a" stroke-width="1.600"/><circle cx="14.500" cy="14" r="4" fill="#2a8ae8" stroke="#1a5aa8"/></svg>
<div class="t" style="left:101px;top:715.5949999999999px;height:24px;line-height:24px;font-size:13.15px;color:#111;">Security <span class="c">设置</span></div>
<div style="left:30px;top:739px;width:370px;height:24px;background:#e4e4e4;border-top:1px solid #fbfbfb"></div>
<svg style="left:61.5px;top:745px;" width="7" height="12" viewBox="0 0 7 12"><path d="M.5 0l6 6-6 6z" fill="#111"/></svg>
<svg style="left:76px;top:741px;" width="20" height="20" viewBox="0 0 20 20"><path d="M.5 1.500h6.500l1.500 3h9v12H.5z" fill="url(#fg)" stroke="#c9a038"/><path d="M1.500 5.500h15" stroke="#fff3c4" stroke-width="1"/><path d="M6 10h5v8H6z" fill="#3a3ad8"/><ellipse cx="8.500" cy="10" rx="2.500" ry="1.300" fill="#7a7af8"/><circle cx="15" cy="7" r="2" fill="#2a3a7a"/><path d="M12.500 18v-6c0-2 5-2 5 0v6z" fill="#2a3a7a"/></svg>
<div class="t" style="left:101px;top:739.325px;height:24px;line-height:24px;font-size:13.15px;color:#111;"><span class="c">公共数据</span></div>
<div style="left:376px;top:217px;width:1px;height:543px;background:#fbfbfb"></div>
<div style="left:401px;top:217px;width:23px;height:543px;background:#c0c0c0;border-left:1px solid #d8d8d8"></div>
<div style="left:401.5px;top:218.5px;width:22px;height:22px;background:linear-gradient(#ededed,#dcdcdc);border:1px solid #9a9a9a;box-shadow:inset 0 0 0 1px #fbfbfb"></div>
<svg style="left:402px;top:219px;" width="21" height="21" viewBox="0 0 21 21"><path d="M5.3 13.1l5.2 -5.2 5.2 5.2" fill="none" stroke="#4a4a4a" stroke-width="2.300"/></svg>
<div style="left:402px;top:242px;width:21px;height:223px;background:linear-gradient(90deg,#eeeeee,#dcdcdc);border:1px solid #9a9a9a;box-shadow:inset 0 0 0 1px #fbfbfb"></div>
<div style="left:408px;top:350px;width:9px;height:1px;background:#666"></div>
<div style="left:408px;top:353px;width:9px;height:1px;background:#666"></div>
<div style="left:408px;top:356px;width:9px;height:1px;background:#666"></div>
<div style="left:408px;top:359px;width:9px;height:1px;background:#666"></div>
<div style="left:401.5px;top:737.5px;width:22px;height:22px;background:linear-gradient(#ededed,#dcdcdc);border:1px solid #9a9a9a;box-shadow:inset 0 0 0 1px #fbfbfb"></div>
<svg style="left:402px;top:738px;" width="21" height="21" viewBox="0 0 21 21"><path d="M5.3 7.9l5.2 5.2 5.2 -5.2" fill="none" stroke="#4a4a4a" stroke-width="2.300"/></svg>
<div style="left:424px;top:92px;width:3px;height:902px;background:#181e34"></div>
<div style="left:427px;top:122px;width:1px;height:872px;background:#e4e4e4"></div>
<div style="left:428px;top:92px;width:1171px;height:30px;background:#2c3350"></div>
<div class="t" style="left:434px;top:95.5px;height:24px;line-height:24px;font-size:15.9px;color:#fff;letter-spacing:0.33px">EliteProfinet</div>
<svg style="left:545px;top:102px;" width="7" height="10" viewBox="0 0 7 10"><path d="M0 0l6 5-6 5z" fill="#fff"/></svg>
<div class="t" style="left:564px;top:95.5px;height:24px;line-height:24px;font-size:16.2px;color:#fff;letter-spacing:0.1px"><span class="c">未分组的设备</span></div>
<svg style="left:690px;top:102px;" width="7" height="10" viewBox="0 0 7 10"><path d="M0 0l6 5-6 5z" fill="#fff"/></svg>
<div class="t" style="left:709px;top:95.5px;height:24px;line-height:24px;font-size:15.9px;color:#fff;">elite-dev [Elite Robot CS Device]</div>
<div style="left:1510px;top:111px;width:13px;height:3px;background:#fff"></div>
<div style="left:1536px;top:100px;width:10px;height:9px;background:#fff"></div>
<div style="left:1532px;top:104px;width:10px;height:10px;background:#fff;border:1px solid #2c3350;border-width:1px 1px 0 0"></div>
<div style="left:1555px;top:101px;width:15px;height:13px;background:#fff"></div>
<div style="left:1555px;top:103px;width:15px;height:1px;background:#2c3350"></div>
<svg style="left:1577px;top:100px;" width="15" height="15" viewBox="0 0 15 15"><path d="M1.500 1.500l12 12M13.500 1.500l-12 12" stroke="#fff" stroke-width="2.600"/></svg>
<div style="left:428px;top:122px;width:1171px;height:3px;background:#e9e9e9"></div>
<div style="left:428px;top:125px;width:1171px;height:32px;background:#cbcbcb"></div>
<div style="left:428px;top:156px;width:685px;height:1px;background:#8a8a8a"></div>
<div style="left:1197px;top:131px;width:130px;height:25px;background:linear-gradient(#d6d6d6,#c6c6c6);border:1px solid #8a8a8a"></div>
<svg style="left:1201px;top:134px;" width="20" height="19" viewBox="0 0 20 19"><rect x="8" y="1" width="9" height="6" fill="#2a3a7a"/><rect x="9.500" y="2" width="6" height="3" fill="#48d0e8"/><rect x="1" y="12" width="9" height="6" fill="#2a3a7a"/><rect x="2.500" y="13" width="6" height="3" fill="#48d0e8"/><path d="M12 7v3H5v2" stroke="#2a3a7a" fill="none" stroke-width="1.500"/></svg>
<div class="t" style="left:1223.5px;top:131.5px;height:24px;line-height:24px;font-size:16.45px;color:#6e6e6e;font-weight:bold;"><span class="c">拓扑视图</span></div>
<div style="left:1329px;top:131px;width:130px;height:25px;background:linear-gradient(#d6d6d6,#c6c6c6);border:1px solid #8a8a8a"></div>
<svg style="left:1333px;top:134px;" width="20" height="19" viewBox="0 0 20 19"><rect x="7.500" y="1" width="5" height="6" fill="#30c8e8" stroke="#286a9a" stroke-width=".8"/><path d="M10 7v3M3.500 13v-3h13v3M10 10v3" stroke="#222" fill="none" stroke-width="1.200"/><rect x="1" y="12.500" width="5" height="6" fill="#30c8e8" stroke="#286a9a" stroke-width=".8"/><rect x="7.500" y="12.500" width="5" height="6" fill="#30c8e8" stroke="#286a9a" stroke-width=".8"/><rect x="14" y="12.500" width="5" height="6" fill="#30c8e8" stroke="#286a9a" stroke-width=".8"/></svg>
<div class="t" style="left:1355.5px;top:131.5px;height:24px;line-height:24px;font-size:16.45px;color:#6e6e6e;font-weight:bold;"><span class="c">网络视图</span></div>
<div style="left:1461px;top:130px;width:131px;height:28px;background:linear-gradient(#f8f8f8,#ebebeb);border:1px solid #7a7a7a;border-bottom:none"></div>
<svg style="left:1465px;top:134px;" width="20" height="19" viewBox="0 0 20 19"><rect x="1" y="1.500" width="7" height="16" fill="#48d0e0" stroke="#3a4a6a" stroke-width="1.500"/><rect x="3" y="3.500" width="3" height="12" fill="#8af0f8"/><path d="M11 1.500v5l2 2V18h3.500V8.500l2-2v-5h-2v4h-3.500v-4z" fill="#1a5aa8"/></svg>
<div class="t" style="left:1487.5px;top:131.5px;height:24px;line-height:24px;font-size:16.45px;color:#000;font-weight:bold;"><span class="c">设备视图</span></div>
<div style="left:428px;top:157px;width:685px;height:34px;background:#ebebeb"></div>
<svg style="left:435px;top:164px;" width="22" height="20" viewBox="0 0 22 20"><rect x="6" y="0" width="3.500" height="6" fill="#30c8e8" stroke="#286a9a" stroke-width=".7"/><path d="M7.750 6v3M2.500 12V9.500h10V12M7.750 9v3" stroke="#222" fill="none"/><rect x=".8" y="11.500" width="3.500" height="7.500" fill="#30c8e8" stroke="#286a9a" stroke-width=".7"/><rect x="6" y="11.500" width="3.500" height="7.500" fill="#30c8e8" stroke="#286a9a" stroke-width=".7"/><rect x="11.200" y="11.500" width="3.500" height="7.500" fill="#30c8e8" stroke="#286a9a" stroke-width=".7"/><path d="M21 9.500h-6M17 5.500l-4.500 4 4.500 4z" stroke="#14144a" fill="#14144a" stroke-width="1.800"/></svg>
<div style="left:463px;top:161px;width:1px;height:27px;border-left:1px dotted #aaaaaa"></div>
<div style="left:471px;top:164px;width:225px;height:22px;background:#fff;border:1px solid #8a8a8a;overflow:hidden"></div>
<div class="t" style="left:478px;top:164px;width:197px;height:22px;line-height:22px;font-size:13.5px;overflow:hidden;color:#111">elite-dev [Elite Robot CS Device]</div>
<div style="left:675px;top:165px;width:20px;height:20px;background:linear-gradient(#f6f6f6,#dcdcdc);border:1px solid #9a9a9a"></div>
<svg style="left:680px;top:172px;" width="10" height="6" viewBox="0 0 10 6"><path d="M0 0h10L5 5.500z" fill="#111"/></svg>
<div style="left:704px;top:161px;width:1px;height:27px;border-left:1px dotted #aaaaaa"></div>
<svg style="left:713px;top:165px;" width="21" height="20" viewBox="0 0 21 20"><rect x=".7" y=".7" width="18.600" height="17.600" fill="#eef0ff" stroke="#b4b8f0" stroke-width="1"/><path d="M.7 18.300h18.600V.7" fill="none" stroke="#8890e0" stroke-width="1.300"/><rect x="3" y="3.500" width="3" height="5.500" fill="#8ae4ee" stroke="#6a7ab0" stroke-width=".7"/><rect x="8.200" y="3.500" width="3" height="5.500" fill="#8ae4ee" stroke="#6a7ab0" stroke-width=".7"/><rect x="13.500" y="3.500" width="3" height="5.500" fill="#8ae4ee" stroke="#6a7ab0" stroke-width=".7"/><path d="M2 14h15.500M2 14l3.300-2.600M2 14l3.300 2.600M17.500 14l-3.300-2.600M17.500 14l-3.300 2.600" stroke="#14144a" stroke-width="1.400" fill="none"/></svg>
<div style="left:741px;top:161px;width:1px;height:27px;border-left:1px dotted #aaaaaa"></div>
<div class="t" style="left:750px;top:165.0px;height:8px;line-height:8px;font-size:6.6px;color:#14144a;font-weight:bold;letter-spacing:-0.2px">NAME</div>
<svg style="left:750px;top:173px;" width="21" height="12" viewBox="0 0 21 12"><rect x="1" y="1" width="3" height="6" fill="#48d0e8" stroke="#286a9a" stroke-width=".6"/><path d="M16 0v4.500H7M10 1.500L6.500 4.500 10 7.500z" stroke="#14144a" fill="#14144a" stroke-width="1.500"/><path d="M2 10.500h18" stroke="#22c022" stroke-width="2"/></svg>
<div style="left:777px;top:161px;width:1px;height:27px;border-left:1px dotted #aaaaaa"></div>
<div style="left:782px;top:161px;width:28px;height:27px;background:#f6f8ff;border:1.500px solid #4a68d8;border-radius:2px"></div>
<svg style="left:786px;top:165px;" width="21" height="20" viewBox="0 0 21 20"><path d="M5 11L17 2" stroke="#111" stroke-width="2.400"/><path d="M1 11h14v5H1z" fill="#6a6a72"/><ellipse cx="15.500" cy="16" rx="5" ry="2.800" fill="#fff" stroke="#333" stroke-width=".8"/><circle cx="15.500" cy="16" r="1.800" fill="#1a2ae8"/></svg>
<svg style="left:816px;top:165px;" width="21" height="20" viewBox="0 0 21 20"><rect x=".7" y=".7" width="18.600" height="17.600" fill="#f4f5ff" stroke="#b4b8f0" stroke-width="1"/><path d="M.7 18.300h18.600V.7" fill="none" stroke="#8890e0" stroke-width="1.300"/><path d="M9.700 1v17M1 6.800h18M1 14.500h18" stroke="#1a1a4a" stroke-width="1.100" stroke-dasharray="1.200 1.200"/></svg>
<div style="left:842px;top:161px;width:28px;height:27px;background:#f6f8ff;border:1.500px solid #4a68d8;border-radius:2px"></div>
<svg style="left:846px;top:165px;" width="21" height="20" viewBox="0 0 21 20"><rect x=".7" y=".7" width="18.600" height="17.600" fill="#f0f2ff" stroke="#a4aaf0" stroke-width="1.200"/><path d="M.7 18.300h18.600V.7" fill="none" stroke="#7a84e0" stroke-width="1.400"/><path d="M9.300 1v17" stroke="#7a84e0" stroke-width="1.300"/><path d="M11.500 3.500h6M11.500 6h6M11.500 8.500h6M11.500 11h6M11.500 13.500h6M11.500 16h6" stroke="#8a8aa8" stroke-width="1" stroke-dasharray="2 1"/></svg>
<div style="left:874px;top:161px;width:1px;height:27px;border-left:1px dotted #aaaaaa"></div>
<svg style="left:880px;top:164px;" width="22" height="21" viewBox="0 0 22 21"><circle cx="8.300" cy="8.300" r="6.600" fill="#fff" stroke="#1a1a52" stroke-width="1.900"/><path d="M4.800 8.300h7M8.300 4.800v7" stroke="#14144a" stroke-width="2"/><path d="M13.500 13.500l2.200 2.200" stroke="#e0a030" stroke-width="3"/><path d="M15.300 15.300l4 4" stroke="#2a4ab8" stroke-width="3.200"/></svg>
<svg style="left:905px;top:168px;" width="12" height="14" viewBox="0 0 12 14"><path d="M6 0v7M2.500 4.500L6 9l3.500-4.500z" fill="#111" stroke="#111" stroke-width="2"/><path d="M1 12h10" stroke="#111" stroke-width="2"/></svg>
<svg style="left:1074px;top:164px;" width="21" height="20" viewBox="0 0 21 20"><rect x=".7" y="1" width="16" height="16.500" fill="url(#bg)" stroke="#a8acf0" stroke-width="1"/><path d="M.7 17.500h16" stroke="#7a80e0" stroke-width="1.400"/><rect x="1.200" y="2.500" width="15" height="2" fill="#b4b8d0"/><path d="M1.200 10h11" stroke="#b4b8d8" stroke-width="1.200"/><circle cx="14.500" cy="8.800" r="2.700" fill="#1a1a5a"/><circle cx="14.500" cy="10" r="1.900" fill="#f0c090"/><path d="M11 19v-4c0-3 7.500-3 7.500 0v4z" fill="#1a6ab8"/></svg>
<div style="left:428px;top:191px;width:662px;height:431px;background:#fff"></div>
<div class="t" style="left:594.500px;top:270.500px;width:70px;height:20px;line-height:19px;background:#8b91a9;color:#1a1a2a;font-size:13.5px;text-align:center;transform:rotate(-45deg)">elite-dev</div>
<div style="left:596px;top:316px;width:365px;height:192.5px;background:#a5a9c5;border:2.3px solid #8d92b2"></div>
<div style="left:598px;top:504.3px;width:361px;height:2px;background:#111"></div>
<div style="left:712px;top:318px;width:1px;height:186px;background:#b1b5c9"></div>
<div style="left:743px;top:318px;width:1px;height:186px;background:#b1b5c9"></div>
<div style="left:775px;top:318px;width:1px;height:186px;background:#b1b5c9"></div>
<div style="left:806px;top:318px;width:1px;height:186px;background:#b1b5c9"></div>
<div style="left:838px;top:318px;width:1px;height:186px;background:#b1b5c9"></div>
<div style="left:869px;top:318px;width:1px;height:186px;background:#b1b5c9"></div>
<div style="left:900px;top:318px;width:1px;height:186px;background:#b1b5c9"></div>
<div style="left:932px;top:318px;width:1px;height:186px;background:#b1b5c9"></div>
<div style="left:680px;top:318px;width:1.2px;height:187px;background:#222"></div>
<div style="left:611px;top:352.5px;width:54px;height:10px;background:#3b435b"></div>
<div style="left:611px;top:370.5px;width:31.5px;height:10.5px;background:#3b435b"></div>
<div style="left:602px;top:412.3px;width:20px;height:20.2px;background:#a5a9c5;border:2.500px solid #1fcf2f"></div>
<div style="left:605.3px;top:416.5px;width:11.5px;height:11.5px;background:#000"></div>
<div style="left:616.8px;top:419.5px;width:2.2px;height:6px;background:#000"></div>
<div style="left:777px;top:399px;width:88px;height:28.5px;background:#fff"></div>
<svg style="left:779px;top:401px;" width="20" height="24" viewBox="0 0 20 24"><path d="M1.500 6L9.500 1.500l8 4.500-8 4.500z" fill="#2aa0e6"/><path d="M1.500 6l8 4.500v11.500l-8-4.500z" fill="#2a2a90"/><path d="M9.500 10.500l8-4.500v11.500l-8 4.500z" fill="#4a3aa8"/><path d="M5.500 9.500l5 2.800v6l-5-2.800z" fill="#fff"/><path d="M10.500 12.300l7-4v3l-4.500 2.600v2.600l4.500-2.600v3l-7 4z" fill="#fff"/><path d="M10.500 12.300l3.500-2v9.500l-3.500 2z" fill="#4a3aa8"/></svg>
<div class="t" style="left:803.5px;top:404.5px;height:8px;line-height:8px;font-size:6.2px;color:#222;letter-spacing:0.95px;font-weight:bold">ELITE ROBOTS</div>
<div class="t" style="left:803.5px;top:414.0px;height:8px;line-height:8px;font-size:6px;color:#222;letter-spacing:3.300px;font-weight:bold"><span class="c">艾利特机器人</span></div>
<div style="left:1090px;top:191px;width:23px;height:431px;background:#c0c0c0;border-left:1px solid #d8d8d8"></div>
<div style="left:1090.5px;top:191.5px;width:22px;height:22px;background:linear-gradient(#ededed,#dcdcdc);border:1px solid #9a9a9a;box-shadow:inset 0 0 0 1px #fbfbfb"></div>
<svg style="left:1091px;top:192px;" width="21" height="21" viewBox="0 0 21 21"><path d="M5.3 13.1l5.2 -5.2 5.2 5.2" fill="none" stroke="#4a4a4a" stroke-width="2.300"/></svg>
<div style="left:1091px;top:215px;width:21px;height:33px;background:linear-gradient(90deg,#eeeeee,#dcdcdc);border:1px solid #9a9a9a;box-shadow:inset 0 0 0 1px #fbfbfb"></div>
<div style="left:1097px;top:227px;width:9px;height:1px;background:#666"></div>
<div style="left:1097px;top:230px;width:9px;height:1px;background:#666"></div>
<div style="left:1097px;top:233px;width:9px;height:1px;background:#666"></div>
<div style="left:1097px;top:236px;width:9px;height:1px;background:#666"></div>
<div style="left:1090.5px;top:599.5px;width:22px;height:22px;background:linear-gradient(#ededed,#dcdcdc);border:1px solid #9a9a9a;box-shadow:inset 0 0 0 1px #fbfbfb"></div>
<svg style="left:1091px;top:600px;" width="21" height="21" viewBox="0 0 21 21"><path d="M5.3 7.9l5.2 5.2 5.2 -5.2" fill="none" stroke="#4a4a4a" stroke-width="2.300"/></svg>
<div style="left:428px;top:622px;width:685px;height:23px;background:#c0c0c0"></div>
<div style="left:428.5px;top:622.5px;width:22px;height:22px;background:linear-gradient(#ededed,#dcdcdc);border:1px solid #9a9a9a;box-shadow:inset 0 0 0 1px #fbfbfb"></div>
<svg style="left:429px;top:623px;" width="21" height="21" viewBox="0 0 21 21"><path d="M13.1 5.3l-5.2 5.2 5.2 5.2" fill="none" stroke="#4a4a4a" stroke-width="2.300"/></svg>
<div style="left:452px;top:623px;width:21px;height:21px;background:linear-gradient(#eeeeee,#dcdcdc);border:1px solid #9a9a9a;box-shadow:inset 0 0 0 1px #fbfbfb"></div>
<div style="left:458px;top:629px;width:1px;height:9px;background:#666"></div>
<div style="left:461px;top:629px;width:1px;height:9px;background:#666"></div>
<div style="left:464px;top:629px;width:1px;height:9px;background:#666"></div>
<div style="left:467px;top:629px;width:1px;height:9px;background:#666"></div>
<div style="left:737.5px;top:622.5px;width:22px;height:22px;background:linear-gradient(#ededed,#dcdcdc);border:1px solid #9a9a9a;box-shadow:inset 0 0 0 1px #fbfbfb"></div>
<svg style="left:738px;top:623px;" width="21" height="21" viewBox="0 0 21 21"><path d="M7.9 5.3l5.2 5.2 -5.2 5.2" fill="none" stroke="#4a4a4a" stroke-width="2.300"/></svg>
<div style="left:761px;top:622px;width:352px;height:23px;background:#ebebeb"></div>
<div style="left:767px;top:623px;width:194px;height:21px;background:#fff;border:1px solid #8a8a8a"></div>
<div class="t" style="left:771px;top:621.5px;height:24px;line-height:24px;font-size:13.2px;color:#111;">100%</div>
<div style="left:941px;top:624px;width:19px;height:19px;background:linear-gradient(#f6f6f6,#dcdcdc);border:1px solid #9a9a9a"></div>
<svg style="left:946px;top:631px;" width="10" height="6" viewBox="0 0 10 6"><path d="M0 0h10L5 5.500z" fill="#111"/></svg>
<div style="left:985px;top:632px;width:83px;height:1px;background:#555"></div>
<div style="left:985px;top:640px;width:1px;height:4px;background:#333"></div>
<div style="left:999px;top:640px;width:1px;height:4px;background:#333"></div>
<div style="left:1012px;top:640px;width:1px;height:4px;background:#333"></div>
<div style="left:1026px;top:640px;width:1px;height:4px;background:#333"></div>
<div style="left:1040px;top:640px;width:1px;height:4px;background:#333"></div>
<div style="left:1053px;top:640px;width:1px;height:4px;background:#333"></div>
<div style="left:1067px;top:640px;width:1px;height:4px;background:#333"></div>
<svg style="left:1021px;top:627px;" width="11" height="16" viewBox="0 0 11 16"><path d="M1 1h9v7.500l-4.500 6L1 8.500z" fill="#e4e4e4" stroke="#8a8a8a"/><path d="M2.500 2.500h6" stroke="#fff" stroke-width="1.500"/></svg>
<div style="left:1090px;top:622px;width:23px;height:23px;background:#fff"></div>
<svg style="left:1092px;top:624px;" width="20" height="19" viewBox="0 0 20 19"><rect x="4.800" y="1.700" width="13" height="15" fill="#a8b8ea" stroke="#1a2a8a" stroke-width="1.300"/><rect x="1" y="5.800" width="8.500" height="6.500" fill="#4a78f8" stroke="#2a4af0" stroke-width="1.200"/></svg>
<div style="left:1113px;top:157px;width:10px;height:3px;background:#ebebeb"></div>
<div style="left:1112.5px;top:160px;width:10.3px;height:485px;background:#dadada;border-left:1.3px solid #9a9a9a;border-top:1px solid #9a9a9a;box-shadow:inset 1.2px 0 0 #f6f6f6"></div>
<div style="left:1115px;top:366.5px;width:7.8px;height:31px;background:linear-gradient(#a8a8a8,#e2e2e2 70%);border:1.2px solid #a0a0a0;border-width:1.2px 0"></div>
<div style="left:1115px;top:409px;width:7.8px;height:30px;background:linear-gradient(#a8a8a8,#e2e2e2 70%);border:1.2px solid #a0a0a0;border-width:1.2px 0"></div>
<svg style="left:1116px;top:378px;" width="5" height="8" viewBox="0 0 5 8"><path d="M5 0v8L0 4z" fill="#111"/></svg>
<svg style="left:1116px;top:420.5px;" width="5" height="8" viewBox="0 0 5 8"><path d="M0 0v8l5-4z" fill="#111"/></svg>
<div style="left:1123px;top:157px;width:476px;height:34px;background:#cbcbcb"></div>
<div style="left:1123px;top:190px;width:476px;height:1px;background:#8a8a8a"></div>
<div style="left:1131px;top:164px;width:118px;height:27px;background:linear-gradient(#f6f6f6,#ebebeb);border:1px solid #7a7a7a;border-bottom:none"></div>
<div class="t" style="left:1145px;top:165.0px;height:24px;line-height:24px;font-size:15.7px;color:#000;font-weight:bold;"><span class="c">设备概览</span></div>
<div style="left:1123px;top:191px;width:476px;height:11px;background:#e9e9e9"></div>
<div style="left:1123px;top:202px;width:476px;height:23px;background:linear-gradient(#f4f4f4,#d8d8d8);border-bottom:1px solid #bcbcbc"></div>
<div style="left:1123px;top:225px;width:476px;height:2px;background:#fafafa"></div>
<div style="left:1153px;top:202px;width:1px;height:22px;background:#fafafa"></div>
<div style="left:1152px;top:202px;width:1px;height:22px;background:#c4c4c4"></div>
<div style="left:1177px;top:202px;width:1px;height:22px;background:#fafafa"></div>
<div style="left:1176px;top:202px;width:1px;height:22px;background:#c4c4c4"></div>
<div style="left:1201px;top:202px;width:1px;height:22px;background:#fafafa"></div>
<div style="left:1200px;top:202px;width:1px;height:22px;background:#c4c4c4"></div>
<div style="left:1432px;top:202px;width:1px;height:22px;background:#fafafa"></div>
<div style="left:1431px;top:202px;width:1px;height:22px;background:#c4c4c4"></div>
<div style="left:1495px;top:202px;width:1px;height:22px;background:#fafafa"></div>
<div style="left:1494px;top:202px;width:1px;height:22px;background:#c4c4c4"></div>
<div style="left:1557px;top:202px;width:1px;height:22px;background:#fafafa"></div>
<div style="left:1556px;top:202px;width:1px;height:22px;background:#c4c4c4"></div>
<svg style="left:1154px;top:203px;" width="21" height="21" viewBox="0 0 21 21"><path d="M10.3 1.500V6A4.200 4.200 0 0 0 18.7 6V1.500H16.1V5.500H12.9V1.500z" fill="#28a828"/><path d="M12.5 8.500h4V20h-4z" fill="#28a828"/><path d="M5.8 1.500V6A4.200 4.200 0 0 0 14.2 6V1.500H11.6V5.500H8.4V1.500z" fill="#f0e020"/><path d="M8 8.500h4V20h-4z" fill="#f0e020"/><path d="M1.2999999999999998 1.500V6A4.200 4.200 0 0 0 9.7 6V1.500H7.1V5.500H3.9V1.500z" fill="#dc1414"/><path d="M3.5 8.500h4V20h-4z" fill="#dc1414"/></svg>
<div class="t" style="left:1180px;top:201.0px;height:24px;line-height:24px;font-size:11px;color:#333;">...</div>
<div class="t" style="left:1206px;top:201.0px;height:24px;line-height:24px;font-size:13.2px;color:#222;"><span class="c">模块</span></div>
<div class="t" style="left:1438px;top:201.0px;height:24px;line-height:24px;font-size:13.2px;color:#222;"><span class="c">机架</span></div>
<div class="t" style="left:1500px;top:201.0px;height:24px;line-height:24px;font-size:13.2px;color:#222;"><span class="c">插槽</span></div>
<div class="t" style="left:1564px;top:201.0px;height:24px;line-height:24px;font-size:12px;color:#2a2a6a;">I ...</div>
<div style="left:1123px;top:227px;width:31px;height:23px;background:#c5ccd7;border-bottom:1px solid #fafafa;border-right:1px solid #fafafa"></div>
<div style="left:1154px;top:227px;width:24px;height:23px;background:#e3e5e8;border-bottom:1px solid #fafafa;border-right:1px solid #fafafa"></div>
<div style="left:1178px;top:227px;width:24px;height:23px;background:#dcdfe4;border-bottom:1px solid #fafafa;border-right:1px solid #fafafa"></div>
<div style="left:1202px;top:227px;width:231px;height:23px;background:#dcdfe4;border-bottom:1px solid #fafafa;border-right:1px solid #fafafa"></div>
<div style="left:1433px;top:227px;width:63px;height:23px;background:#dcdfe4;border-bottom:1px solid #fafafa;border-right:1px solid #fafafa"></div>
<div style="left:1496px;top:227px;width:62px;height:23px;background:#dcdfe4;border-bottom:1px solid #fafafa;border-right:1px solid #fafafa"></div>
<div style="left:1558px;top:227px;width:41px;height:23px;background:#dcdfe4;border-bottom:1px solid #fafafa;border-right:1px solid #fafafa"></div>
<svg style="left:1209px;top:236px;" width="10" height="7" viewBox="0 0 10 7"><path d="M0 1h10L5 6.500z" fill="#111"/></svg>
<div class="t" style="left:1231px;top:226.76500000000001px;height:24px;line-height:24px;font-size:13.2px;color:#111;">elite-dev</div>
<div class="t" style="left:1438.5px;top:226.76500000000001px;height:24px;line-height:24px;font-size:13.2px;color:#111;">0</div>
<div class="t" style="left:1501px;top:226.76500000000001px;height:24px;line-height:24px;font-size:13.2px;color:#111;">0</div>
<div class="t" style="left:1564px;top:226.76500000000001px;height:24px;line-height:24px;font-size:13.2px;color:#111;"></div>
<div style="left:1123px;top:250px;width:31px;height:24px;background:#d2d2d2;border-bottom:1px solid #fafafa;border-right:1px solid #fafafa"></div>
<div style="left:1154px;top:250px;width:24px;height:24px;background:#e8e8e8;border-bottom:1px solid #fafafa;border-right:1px solid #fafafa"></div>
<div style="left:1178px;top:250px;width:24px;height:24px;background:#e1e1e1;border-bottom:1px solid #fafafa;border-right:1px solid #fafafa"></div>
<div style="left:1202px;top:250px;width:231px;height:24px;background:#f0f0f0;border-bottom:1px solid #fafafa;border-right:1px solid #fafafa"></div>
<div style="left:1433px;top:250px;width:63px;height:24px;background:#f0f0f0;border-bottom:1px solid #fafafa;border-right:1px solid #fafafa"></div>
<div style="left:1496px;top:250px;width:62px;height:24px;background:#f0f0f0;border-bottom:1px solid #fafafa;border-right:1px solid #fafafa"></div>
<div style="left:1558px;top:250px;width:41px;height:24px;background:#e1e1e1;border-bottom:1px solid #fafafa;border-right:1px solid #fafafa"></div>
<svg style="left:1234px;top:257px;" width="7" height="10" viewBox="0 0 7 10"><path d="M1 0l5.500 5L1 10z" fill="#111"/></svg>
<div class="t" style="left:1254px;top:250.495px;height:24px;line-height:24px;font-size:13.2px;color:#a0a0a0;letter-spacing:0.4px">Interface</div>
<div class="t" style="left:1438.5px;top:250.495px;height:24px;line-height:24px;font-size:13.2px;color:#a0a0a0;">0</div>
<div class="t" style="left:1501px;top:250.495px;height:24px;line-height:24px;font-size:13.2px;color:#a0a0a0;">0 X1</div>
<div class="t" style="left:1564px;top:250.495px;height:24px;line-height:24px;font-size:13.2px;color:#a0a0a0;"></div>
<div style="left:1123px;top:274px;width:31px;height:24px;background:#d2d2d2;border-bottom:1px solid #fafafa;border-right:1px solid #fafafa"></div>
<div style="left:1154px;top:274px;width:24px;height:24px;background:#e8e8e8;border-bottom:1px solid #fafafa;border-right:1px solid #fafafa"></div>
<div style="left:1178px;top:274px;width:24px;height:24px;background:#e1e1e1;border-bottom:1px solid #fafafa;border-right:1px solid #fafafa"></div>
<div style="left:1202px;top:274px;width:231px;height:24px;background:#f0f0f0;border-bottom:1px solid #fafafa;border-right:1px solid #fafafa"></div>
<div style="left:1433px;top:274px;width:63px;height:24px;background:#e1e1e1;border-bottom:1px solid #fafafa;border-right:1px solid #fafafa"></div>
<div style="left:1496px;top:274px;width:62px;height:24px;background:#e1e1e1;border-bottom:1px solid #fafafa;border-right:1px solid #fafafa"></div>
<div style="left:1558px;top:274px;width:41px;height:24px;background:#f0f0f0;border-bottom:1px solid #fafafa;border-right:1px solid #fafafa"></div>
<div class="t" style="left:1231px;top:274.225px;height:24px;line-height:24px;font-size:13.2px;color:#111;">R2P_State_1</div>
<div class="t" style="left:1438.5px;top:274.225px;height:24px;line-height:24px;font-size:13.2px;color:#111;">0</div>
<div class="t" style="left:1501px;top:274.225px;height:24px;line-height:24px;font-size:13.2px;color:#111;">1</div>
<div class="t" style="left:1564px;top:274.225px;height:24px;line-height:24px;font-size:13.2px;color:#111;">10...</div>
<div style="left:1123px;top:298px;width:31px;height:24px;background:#d2d2d2;border-bottom:1px solid #fafafa;border-right:1px solid #fafafa"></div>
<div style="left:1154px;top:298px;width:24px;height:24px;background:#e8e8e8;border-bottom:1px solid #fafafa;border-right:1px solid #fafafa"></div>
<div style="left:1178px;top:298px;width:24px;height:24px;background:#e1e1e1;border-bottom:1px solid #fafafa;border-right:1px solid #fafafa"></div>
<div style="left:1202px;top:298px;width:231px;height:24px;background:#f0f0f0;border-bottom:1px solid #fafafa;border-right:1px solid #fafafa"></div>
<div style="left:1433px;top:298px;width:63px;height:24px;background:#e1e1e1;border-bottom:1px solid #fafafa;border-right:1px solid #fafafa"></div>
<div style="left:1496px;top:298px;width:62px;height:24px;background:#e1e1e1;border-bottom:1px solid #fafafa;border-right:1px solid #fafafa"></div>
<div style="left:1558px;top:298px;width:41px;height:24px;background:#f0f0f0;border-bottom:1px solid #fafafa;border-right:1px solid #fafafa"></div>
<div class="t" style="left:1231px;top:297.955px;height:24px;line-height:24px;font-size:13.2px;color:#111;">R2P_IO_1</div>
<div class="t" style="left:1438.5px;top:297.955px;height:24px;line-height:24px;font-size:13.2px;color:#111;">0</div>
<div class="t" style="left:1501px;top:297.955px;height:24px;line-height:24px;font-size:13.2px;color:#111;">2</div>
<div class="t" style="left:1564px;top:297.955px;height:24px;line-height:24px;font-size:13.2px;color:#111;">26...</div>
<div style="left:1123px;top:322px;width:31px;height:23px;background:#d2d2d2;border-bottom:1px solid #fafafa;border-right:1px solid #fafafa"></div>
<div style="left:1154px;top:322px;width:24px;height:23px;background:#e8e8e8;border-bottom:1px solid #fafafa;border-right:1px solid #fafafa"></div>
<div style="left:1178px;top:322px;width:24px;height:23px;background:#e1e1e1;border-bottom:1px solid #fafafa;border-right:1px solid #fafafa"></div>
<div style="left:1202px;top:322px;width:231px;height:23px;background:#f0f0f0;border-bottom:1px solid #fafafa;border-right:1px solid #fafafa"></div>
<div style="left:1433px;top:322px;width:63px;height:23px;background:#e1e1e1;border-bottom:1px solid #fafafa;border-right:1px solid #fafafa"></div>
<div style="left:1496px;top:322px;width:62px;height:23px;background:#e1e1e1;border-bottom:1px solid #fafafa;border-right:1px solid #fafafa"></div>
<div style="left:1558px;top:322px;width:41px;height:23px;background:#f0f0f0;border-bottom:1px solid #fafafa;border-right:1px solid #fafafa"></div>
<div class="t" style="left:1231px;top:321.685px;height:24px;line-height:24px;font-size:13.2px;color:#111;">R2P_Joints_1</div>
<div class="t" style="left:1438.5px;top:321.685px;height:24px;line-height:24px;font-size:13.2px;color:#111;">0</div>
<div class="t" style="left:1501px;top:321.685px;height:24px;line-height:24px;font-size:13.2px;color:#111;">3</div>
<div class="t" style="left:1564px;top:321.685px;height:24px;line-height:24px;font-size:13.2px;color:#111;">32...</div>
<div style="left:1123px;top:345px;width:31px;height:24px;background:#d2d2d2;border-bottom:1px solid #fafafa;border-right:1px solid #fafafa"></div>
<div style="left:1154px;top:345px;width:24px;height:24px;background:#e8e8e8;border-bottom:1px solid #fafafa;border-right:1px solid #fafafa"></div>
<div style="left:1178px;top:345px;width:24px;height:24px;background:#e1e1e1;border-bottom:1px solid #fafafa;border-right:1px solid #fafafa"></div>
<div style="left:1202px;top:345px;width:231px;height:24px;background:#f0f0f0;border-bottom:1px solid #fafafa;border-right:1px solid #fafafa"></div>
<div style="left:1433px;top:345px;width:63px;height:24px;background:#e1e1e1;border-bottom:1px solid #fafafa;border-right:1px solid #fafafa"></div>
<div style="left:1496px;top:345px;width:62px;height:24px;background:#e1e1e1;border-bottom:1px solid #fafafa;border-right:1px solid #fafafa"></div>
<div style="left:1558px;top:345px;width:41px;height:24px;background:#f0f0f0;border-bottom:1px solid #fafafa;border-right:1px solid #fafafa"></div>
<div class="t" style="left:1231px;top:345.415px;height:24px;line-height:24px;font-size:13.2px;color:#111;">R2P_TCP_1</div>
<div class="t" style="left:1438.5px;top:345.415px;height:24px;line-height:24px;font-size:13.2px;color:#111;">0</div>
<div class="t" style="left:1501px;top:345.415px;height:24px;line-height:24px;font-size:13.2px;color:#111;">4</div>
<div class="t" style="left:1564px;top:345.415px;height:24px;line-height:24px;font-size:13.2px;color:#111;">43...</div>
<div style="left:1123px;top:369px;width:31px;height:24px;background:#d2d2d2;border-bottom:1px solid #fafafa;border-right:1px solid #fafafa"></div>
<div style="left:1154px;top:369px;width:24px;height:24px;background:#e8e8e8;border-bottom:1px solid #fafafa;border-right:1px solid #fafafa"></div>
<div style="left:1178px;top:369px;width:24px;height:24px;background:#e1e1e1;border-bottom:1px solid #fafafa;border-right:1px solid #fafafa"></div>
<div style="left:1202px;top:369px;width:231px;height:24px;background:#f0f0f0;border-bottom:1px solid #fafafa;border-right:1px solid #fafafa"></div>
<div style="left:1433px;top:369px;width:63px;height:24px;background:#e1e1e1;border-bottom:1px solid #fafafa;border-right:1px solid #fafafa"></div>
<div style="left:1496px;top:369px;width:62px;height:24px;background:#e1e1e1;border-bottom:1px solid #fafafa;border-right:1px solid #fafafa"></div>
<div style="left:1558px;top:369px;width:41px;height:24px;background:#f0f0f0;border-bottom:1px solid #fafafa;border-right:1px solid #fafafa"></div>
<div class="t" style="left:1231px;top:369.14500000000004px;height:24px;line-height:24px;font-size:13.2px;color:#111;">R2P_BIT_REG_1</div>
<div class="t" style="left:1438.5px;top:369.14500000000004px;height:24px;line-height:24px;font-size:13.2px;color:#111;">0</div>
<div class="t" style="left:1501px;top:369.14500000000004px;height:24px;line-height:24px;font-size:13.2px;color:#111;">5</div>
<div class="t" style="left:1564px;top:369.14500000000004px;height:24px;line-height:24px;font-size:13.2px;color:#111;">2...9</div>
<div style="left:1123px;top:393px;width:31px;height:23px;background:#d2d2d2;border-bottom:1px solid #fafafa;border-right:1px solid #fafafa"></div>
<div style="left:1154px;top:393px;width:24px;height:23px;background:#e8e8e8;border-bottom:1px solid #fafafa;border-right:1px solid #fafafa"></div>
<div style="left:1178px;top:393px;width:24px;height:23px;background:#e1e1e1;border-bottom:1px solid #fafafa;border-right:1px solid #fafafa"></div>
<div style="left:1202px;top:393px;width:231px;height:23px;background:#f0f0f0;border-bottom:1px solid #fafafa;border-right:1px solid #fafafa"></div>
<div style="left:1433px;top:393px;width:63px;height:23px;background:#e1e1e1;border-bottom:1px solid #fafafa;border-right:1px solid #fafafa"></div>
<div style="left:1496px;top:393px;width:62px;height:23px;background:#e1e1e1;border-bottom:1px solid #fafafa;border-right:1px solid #fafafa"></div>
<div style="left:1558px;top:393px;width:41px;height:23px;background:#f0f0f0;border-bottom:1px solid #fafafa;border-right:1px solid #fafafa"></div>
<div class="t" style="left:1231px;top:392.87500000000006px;height:24px;line-height:24px;font-size:13.2px;color:#111;">R2P_INT_REG_1</div>
<div class="t" style="left:1438.5px;top:392.87500000000006px;height:24px;line-height:24px;font-size:13.2px;color:#111;">0</div>
<div class="t" style="left:1501px;top:392.87500000000006px;height:24px;line-height:24px;font-size:13.2px;color:#111;">6</div>
<div class="t" style="left:1564px;top:392.87500000000006px;height:24px;line-height:24px;font-size:13.2px;color:#111;">16...</div>
<div style="left:1123px;top:416px;width:31px;height:24px;background:#d2d2d2;border-bottom:1px solid #fafafa;border-right:1px solid #fafafa"></div>
<div style="left:1154px;top:416px;width:24px;height:24px;background:#e8e8e8;border-bottom:1px solid #fafafa;border-right:1px solid #fafafa"></div>
<div style="left:1178px;top:416px;width:24px;height:24px;background:#e1e1e1;border-bottom:1px solid #fafafa;border-right:1px solid #fafafa"></div>
<div style="left:1202px;top:416px;width:231px;height:24px;background:#f0f0f0;border-bottom:1px solid #fafafa;border-right:1px solid #fafafa"></div>
<div style="left:1433px;top:416px;width:63px;height:24px;background:#e1e1e1;border-bottom:1px solid #fafafa;border-right:1px solid #fafafa"></div>
<div style="left:1496px;top:416px;width:62px;height:24px;background:#e1e1e1;border-bottom:1px solid #fafafa;border-right:1px solid #fafafa"></div>
<div style="left:1558px;top:416px;width:41px;height:24px;background:#f0f0f0;border-bottom:1px solid #fafafa;border-right:1px solid #fafafa"></div>
<div class="t" style="left:1231px;top:416.605px;height:24px;line-height:24px;font-size:13.2px;color:#111;">R2P_FLOAT_REG_1</div>
<div class="t" style="left:1438.5px;top:416.605px;height:24px;line-height:24px;font-size:13.2px;color:#111;">0</div>
<div class="t" style="left:1501px;top:416.605px;height:24px;line-height:24px;font-size:13.2px;color:#111;">7</div>
<div class="t" style="left:1564px;top:416.605px;height:24px;line-height:24px;font-size:13.2px;color:#111;">68...</div>
<div style="left:1123px;top:440px;width:31px;height:24px;background:#d2d2d2;border-bottom:1px solid #fafafa;border-right:1px solid #fafafa"></div>
<div style="left:1154px;top:440px;width:24px;height:24px;background:#e8e8e8;border-bottom:1px solid #fafafa;border-right:1px solid #fafafa"></div>
<div style="left:1178px;top:440px;width:24px;height:24px;background:#e1e1e1;border-bottom:1px solid #fafafa;border-right:1px solid #fafafa"></div>
<div style="left:1202px;top:440px;width:231px;height:24px;background:#f0f0f0;border-bottom:1px solid #fafafa;border-right:1px solid #fafafa"></div>
<div style="left:1433px;top:440px;width:63px;height:24px;background:#e1e1e1;border-bottom:1px solid #fafafa;border-right:1px solid #fafafa"></div>
<div style="left:1496px;top:440px;width:62px;height:24px;background:#e1e1e1;border-bottom:1px solid #fafafa;border-right:1px solid #fafafa"></div>
<div style="left:1558px;top:440px;width:41px;height:24px;background:#e1e1e1;border-bottom:1px solid #fafafa;border-right:1px solid #fafafa"></div>
<div class="t" style="left:1231px;top:440.335px;height:24px;line-height:24px;font-size:13.2px;color:#111;">P2R_IO_1</div>
<div class="t" style="left:1438.5px;top:440.335px;height:24px;line-height:24px;font-size:13.2px;color:#111;">0</div>
<div class="t" style="left:1501px;top:440.335px;height:24px;line-height:24px;font-size:13.2px;color:#111;">8</div>
<div class="t" style="left:1564px;top:440.335px;height:24px;line-height:24px;font-size:13.2px;color:#111;"></div>
<div style="left:1123px;top:464px;width:31px;height:24px;background:#d2d2d2;border-bottom:1px solid #fafafa;border-right:1px solid #fafafa"></div>
<div style="left:1154px;top:464px;width:24px;height:24px;background:#e8e8e8;border-bottom:1px solid #fafafa;border-right:1px solid #fafafa"></div>
<div style="left:1178px;top:464px;width:24px;height:24px;background:#e1e1e1;border-bottom:1px solid #fafafa;border-right:1px solid #fafafa"></div>
<div style="left:1202px;top:464px;width:231px;height:24px;background:#f0f0f0;border-bottom:1px solid #fafafa;border-right:1px solid #fafafa"></div>
<div style="left:1433px;top:464px;width:63px;height:24px;background:#e1e1e1;border-bottom:1px solid #fafafa;border-right:1px solid #fafafa"></div>
<div style="left:1496px;top:464px;width:62px;height:24px;background:#e1e1e1;border-bottom:1px solid #fafafa;border-right:1px solid #fafafa"></div>
<div style="left:1558px;top:464px;width:41px;height:24px;background:#e1e1e1;border-bottom:1px solid #fafafa;border-right:1px solid #fafafa"></div>
<div class="t" style="left:1231px;top:464.065px;height:24px;line-height:24px;font-size:13.2px;color:#111;">P2R_REG1_1</div>
<div class="t" style="left:1438.5px;top:464.065px;height:24px;line-height:24px;font-size:13.2px;color:#111;">0</div>
<div class="t" style="left:1501px;top:464.065px;height:24px;line-height:24px;font-size:13.2px;color:#111;">9</div>
<div class="t" style="left:1564px;top:464.065px;height:24px;line-height:24px;font-size:13.2px;color:#111;"></div>
<div style="left:1123px;top:488px;width:31px;height:23px;background:#d2d2d2;border-bottom:1px solid #fafafa;border-right:1px solid #fafafa"></div>
<div style="left:1154px;top:488px;width:24px;height:23px;background:#e8e8e8;border-bottom:1px solid #fafafa;border-right:1px solid #fafafa"></div>
<div style="left:1178px;top:488px;width:24px;height:23px;background:#e1e1e1;border-bottom:1px solid #fafafa;border-right:1px solid #fafafa"></div>
<div style="left:1202px;top:488px;width:231px;height:23px;background:#f0f0f0;border-bottom:1px solid #fafafa;border-right:1px solid #fafafa"></div>
<div style="left:1433px;top:488px;width:63px;height:23px;background:#e1e1e1;border-bottom:1px solid #fafafa;border-right:1px solid #fafafa"></div>
<div style="left:1496px;top:488px;width:62px;height:23px;background:#e1e1e1;border-bottom:1px solid #fafafa;border-right:1px solid #fafafa"></div>
<div style="left:1558px;top:488px;width:41px;height:23px;background:#e1e1e1;border-bottom:1px solid #fafafa;border-right:1px solid #fafafa"></div>
<div class="t" style="left:1231px;top:487.795px;height:24px;line-height:24px;font-size:13.2px;color:#111;">P2R_REG2_1</div>
<div class="t" style="left:1438.5px;top:487.795px;height:24px;line-height:24px;font-size:13.2px;color:#111;">0</div>
<div class="t" style="left:1501px;top:487.795px;height:24px;line-height:24px;font-size:13.2px;color:#111;">10</div>
<div class="t" style="left:1564px;top:487.795px;height:24px;line-height:24px;font-size:13.2px;color:#111;"></div>
<div style="left:1123px;top:511px;width:31px;height:24px;background:#d2d2d2;border-bottom:1px solid #fafafa;border-right:1px solid #fafafa"></div>
<div style="left:1154px;top:511px;width:24px;height:24px;background:#f0f0f0;border-bottom:1px solid #fafafa;border-right:1px solid #fafafa"></div>
<div style="left:1178px;top:511px;width:24px;height:24px;background:#f0f0f0;border-bottom:1px solid #fafafa;border-right:1px solid #fafafa"></div>
<div style="left:1202px;top:511px;width:231px;height:24px;background:#f0f0f0;border-bottom:1px solid #fafafa;border-right:1px solid #fafafa"></div>
<div style="left:1433px;top:511px;width:63px;height:24px;background:#f0f0f0;border-bottom:1px solid #fafafa;border-right:1px solid #fafafa"></div>
<div style="left:1496px;top:511px;width:62px;height:24px;background:#f0f0f0;border-bottom:1px solid #fafafa;border-right:1px solid #fafafa"></div>
<div style="left:1558px;top:511px;width:41px;height:24px;background:#f0f0f0;border-bottom:1px solid #fafafa;border-right:1px solid #fafafa"></div>
<div style="left:1123px;top:535px;width:31px;height:24px;background:#d2d2d2;border-bottom:1px solid #fafafa;border-right:1px solid #fafafa"></div>
<div style="left:1154px;top:535px;width:24px;height:24px;background:#f0f0f0;border-bottom:1px solid #fafafa;border-right:1px solid #fafafa"></div>
<div style="left:1178px;top:535px;width:24px;height:24px;background:#f0f0f0;border-bottom:1px solid #fafafa;border-right:1px solid #fafafa"></div>
<div style="left:1202px;top:535px;width:231px;height:24px;background:#f0f0f0;border-bottom:1px solid #fafafa;border-right:1px solid #fafafa"></div>
<div style="left:1433px;top:535px;width:63px;height:24px;background:#f0f0f0;border-bottom:1px solid #fafafa;border-right:1px solid #fafafa"></div>
<div style="left:1496px;top:535px;width:62px;height:24px;background:#f0f0f0;border-bottom:1px solid #fafafa;border-right:1px solid #fafafa"></div>
<div style="left:1558px;top:535px;width:41px;height:24px;background:#f0f0f0;border-bottom:1px solid #fafafa;border-right:1px solid #fafafa"></div>
<div style="left:1123px;top:559px;width:31px;height:24px;background:#d2d2d2;border-bottom:1px solid #fafafa;border-right:1px solid #fafafa"></div>
<div style="left:1154px;top:559px;width:24px;height:24px;background:#f0f0f0;border-bottom:1px solid #fafafa;border-right:1px solid #fafafa"></div>
<div style="left:1178px;top:559px;width:24px;height:24px;background:#f0f0f0;border-bottom:1px solid #fafafa;border-right:1px solid #fafafa"></div>
<div style="left:1202px;top:559px;width:231px;height:24px;background:#f0f0f0;border-bottom:1px solid #fafafa;border-right:1px solid #fafafa"></div>
<div style="left:1433px;top:559px;width:63px;height:24px;background:#f0f0f0;border-bottom:1px solid #fafafa;border-right:1px solid #fafafa"></div>
<div style="left:1496px;top:559px;width:62px;height:24px;background:#f0f0f0;border-bottom:1px solid #fafafa;border-right:1px solid #fafafa"></div>
<div style="left:1558px;top:559px;width:41px;height:24px;background:#f0f0f0;border-bottom:1px solid #fafafa;border-right:1px solid #fafafa"></div>
<div style="left:1123px;top:583px;width:31px;height:23px;background:#d2d2d2;border-bottom:1px solid #fafafa;border-right:1px solid #fafafa"></div>
<div style="left:1154px;top:583px;width:24px;height:23px;background:#f0f0f0;border-bottom:1px solid #fafafa;border-right:1px solid #fafafa"></div>
<div style="left:1178px;top:583px;width:24px;height:23px;background:#f0f0f0;border-bottom:1px solid #fafafa;border-right:1px solid #fafafa"></div>
<div style="left:1202px;top:583px;width:231px;height:23px;background:#f0f0f0;border-bottom:1px solid #fafafa;border-right:1px solid #fafafa"></div>
<div style="left:1433px;top:583px;width:63px;height:23px;background:#f0f0f0;border-bottom:1px solid #fafafa;border-right:1px solid #fafafa"></div>
<div style="left:1496px;top:583px;width:62px;height:23px;background:#f0f0f0;border-bottom:1px solid #fafafa;border-right:1px solid #fafafa"></div>
<div style="left:1558px;top:583px;width:41px;height:23px;background:#f0f0f0;border-bottom:1px solid #fafafa;border-right:1px solid #fafafa"></div>
<div style="left:1123px;top:606px;width:31px;height:16px;background:#d2d2d2;border-bottom:1px solid #fafafa;border-right:1px solid #fafafa"></div>
<div style="left:1154px;top:606px;width:24px;height:16px;background:#f0f0f0;border-bottom:1px solid #fafafa;border-right:1px solid #fafafa"></div>
<div style="left:1178px;top:606px;width:24px;height:16px;background:#f0f0f0;border-bottom:1px solid #fafafa;border-right:1px solid #fafafa"></div>
<div style="left:1202px;top:606px;width:231px;height:16px;background:#f0f0f0;border-bottom:1px solid #fafafa;border-right:1px solid #fafafa"></div>
<div style="left:1433px;top:606px;width:63px;height:16px;background:#f0f0f0;border-bottom:1px solid #fafafa;border-right:1px solid #fafafa"></div>
<div style="left:1496px;top:606px;width:62px;height:16px;background:#f0f0f0;border-bottom:1px solid #fafafa;border-right:1px solid #fafafa"></div>
<div style="left:1558px;top:606px;width:41px;height:16px;background:#f0f0f0;border-bottom:1px solid #fafafa;border-right:1px solid #fafafa"></div>
<div style="left:1123px;top:622px;width:476px;height:23px;background:#c0c0c0"></div>
<div style="left:1123px;top:622px;width:31px;height:23px;background:#d2d2d2"></div>
<div style="left:1154.5px;top:622.5px;width:22px;height:22px;background:linear-gradient(#ededed,#dcdcdc);border:1px solid #9a9a9a;box-shadow:inset 0 0 0 1px #fbfbfb"></div>
<svg style="left:1155px;top:623px;" width="21" height="21" viewBox="0 0 21 21"><path d="M13.1 5.3l-5.2 5.2 5.2 5.2" fill="none" stroke="#4a4a4a" stroke-width="2.300"/></svg>
<div style="left:1178px;top:623px;width:260px;height:21px;background:linear-gradient(#eeeeee,#dcdcdc);border:1px solid #9a9a9a;box-shadow:inset 0 0 0 1px #fbfbfb"></div>
<div style="left:1303px;top:629px;width:1px;height:9px;background:#666"></div>
<div style="left:1306px;top:629px;width:1px;height:9px;background:#666"></div>
<div style="left:1309px;top:629px;width:1px;height:9px;background:#666"></div>
<div style="left:1312px;top:629px;width:1px;height:9px;background:#666"></div>
<div style="left:1576.5px;top:622.5px;width:22px;height:22px;background:linear-gradient(#ededed,#dcdcdc);border:1px solid #9a9a9a;box-shadow:inset 0 0 0 1px #fbfbfb"></div>
<svg style="left:1577px;top:623px;" width="21" height="21" viewBox="0 0 21 21"><path d="M7.9 5.3l5.2 5.2 -5.2 5.2" fill="none" stroke="#4a4a4a" stroke-width="2.300"/></svg>
<div style="left:428px;top:645px;width:1171px;height:4.5px;background:#262c46"></div>
<div style="left:1599px;top:92px;width:3.5px;height:902px;background:#181e34"></div>
<div style="left:30px;top:760px;width:394px;height:3px;background:#22283f"></div>
<div style="left:30px;top:763px;width:394px;height:26px;background:linear-gradient(#f0f0f0,#dcdcdc)"></div>
<svg style="left:36px;top:771px;" width="13" height="9" viewBox="0 0 13 9"><path d="M1.500 1.500l5 5 5-5" fill="none" stroke="#111" stroke-width="2.200"/></svg>
<div style="left:55px;top:763px;width:1px;height:26px;background:#b4b4b4"></div>
<div style="left:56px;top:763px;width:1px;height:26px;background:#fafafa"></div>
<div class="t" style="left:61px;top:764.5px;height:24px;line-height:24px;font-size:16.2px;color:#000;font-weight:bold;"><span class="c">详细视图</span></div>
<div style="left:30px;top:789px;width:394px;height:31px;background:#cbcbcb;border-top:1px solid #9a9a9a;border-bottom:1px solid #9a9a9a"></div>
<div style="left:30px;top:820px;width:394px;height:35px;background:#ececec"></div>
<div style="left:30px;top:855px;width:394px;height:23px;background:linear-gradient(#f4f4f4,#dadada);border-top:1px solid #c4c4c4;border-bottom:1px solid #c0c0c0"></div>
<div style="left:52px;top:855px;width:1px;height:23px;background:#c4c4c4"></div>
<div style="left:53px;top:855px;width:1px;height:23px;background:#fafafa"></div>
<div style="left:252px;top:855px;width:1px;height:23px;background:#c4c4c4"></div>
<div style="left:253px;top:855px;width:1px;height:23px;background:#fafafa"></div>
<div class="t" style="left:58px;top:854.5px;height:24px;line-height:24px;font-size:13.2px;color:#222;"><span class="c">名称</span></div>
<div style="left:30px;top:878px;width:394px;height:116px;background:#f0f0f0"></div>
<div style="left:30px;top:902px;width:394px;height:1px;background:#fbfbfb"></div>
<div style="left:30px;top:926px;width:394px;height:1px;background:#fbfbfb"></div>
<div style="left:30px;top:950px;width:394px;height:1px;background:#fbfbfb"></div>
<div style="left:30px;top:974px;width:394px;height:1px;background:#fbfbfb"></div>
<div style="left:428px;top:650px;width:1171px;height:30px;background:#ababab"></div>
<div class="t" style="left:434px;top:653.0px;height:24px;line-height:24px;font-size:16.2px;color:#fff;">elite-dev [Elite Robot CS Device]</div>
<div style="left:428px;top:679.5px;width:1171px;height:3.3px;background:#262c46"></div>
<div style="left:428px;top:684px;width:1171px;height:310px;background:#ebebeb"></div>
<div style="left:1224px;top:653px;width:93px;height:31px;background:linear-gradient(#f4f4f4,#e8e8e8);border:1px solid #6a6a6a;border-bottom:none;border-top:2px solid #181e34"></div>
<svg style="left:1228px;top:657px;" width="20" height="20" viewBox="0 0 20 20"><rect x="1" y="2" width="14" height="14" fill="#e8ecff" stroke="#8a96d0"/><path d="M3 5h7M3 8h4M3 11h4" stroke="#6a76b0"/><circle cx="11" cy="9.500" r="4" fill="#fff" stroke="#444" stroke-width="1.400"/><path d="M14 12.500l5 5" stroke="#e08a20" stroke-width="2.600"/></svg>
<div class="t" style="left:1251px;top:655.0px;height:24px;line-height:24px;font-size:16.2px;color:#000;font-weight:bold;"><span class="c">属性</span></div>
<div style="left:1319px;top:653px;width:93px;height:26px;background:linear-gradient(#d6d6d6,#c2c2c2);border:1px solid #8a8a8a"></div>
<svg style="left:1323px;top:657px;" width="20" height="20" viewBox="0 0 20 20"><rect x="5" y="2" width="13" height="15" fill="#e8ecff" stroke="#8a96d0"/><path d="M11.500 8v7M9 15.500h5.500M9.500 8h2" stroke="#111" stroke-width="2"/><circle cx="11.500" cy="5" r="1.400" fill="#111"/><path d="M1 3h5M4 0l3 3-3 3M13 18h6M16.500 15l3 3-3 3" stroke="#14146a" stroke-width="1.600" fill="none"/></svg>
<div class="t" style="left:1346px;top:655.0px;height:24px;line-height:24px;font-size:16.2px;color:#6e6e6e;font-weight:bold;"><span class="c">信息</span></div>
<div style="left:1414.5px;top:653px;width:93px;height:26px;background:linear-gradient(#d6d6d6,#c2c2c2);border:1px solid #8a8a8a"></div>
<svg style="left:1418.5px;top:657px;" width="20" height="20" viewBox="0 0 20 20"><rect x="2.500" y="1.500" width="13" height="16" fill="#fff" stroke="#8a8ae0"/><path d="M5.500 4v5c0 2 1 3 2.500 3s2.500-1 2.500-3V4M8 12v2c0 1.500 3 1.500 4 0" stroke="#1a1a6a" fill="none" stroke-width="1.400"/><circle cx="12.500" cy="12.500" r="1.600" fill="#1a1a6a"/></svg>
<div class="t" style="left:1441.5px;top:655.0px;height:24px;line-height:24px;font-size:16.2px;color:#6e6e6e;font-weight:bold;"><span class="c">诊断</span></div>
<div style="left:1536px;top:657px;width:10px;height:9px;background:#fff"></div>
<div style="left:1532px;top:661px;width:10px;height:10px;background:#fff;border:1px solid #ababab;border-width:1px 1px 0 0"></div>
<div style="left:1555px;top:658px;width:15px;height:13px;background:linear-gradient(#cfcfcf 0 3px,#ababab 3px 5px,#cfcfcf 5px 8px,#ababab 8px 10px,#cfcfcf 10px)"></div>
<svg style="left:1577px;top:659px;" width="17" height="10" viewBox="0 0 17 10"><path d="M0 0h16L8 9z" fill="#fff"/></svg>
<div style="left:428px;top:683px;width:1171px;height:30px;background:#cbcbcb"></div>
<div style="left:428px;top:712px;width:1171px;height:1px;background:#8a8a8a"></div>
<div style="left:436px;top:687px;width:77px;height:26px;background:linear-gradient(#f8f8f8,#ececec);border:1px solid #7a7a7a;border-bottom:none"></div>
<div class="t" style="left:436px;top:688px;width:77px;height:24px;line-height:24px;padding-left:14px;font-size:16.2px;color:#000;font-weight:bold;"><span class="c">常规</span></div>
<div style="left:516px;top:688px;width:99px;height:25px;background:linear-gradient(#d8d8d8,#c8c8c8);border:1px solid #8a8a8a;border-bottom:none"></div>
<div class="t" style="left:516px;top:688px;width:99px;height:24px;line-height:24px;padding-left:14px;font-size:16.2px;color:#6e6e6e;">IO <span class="c">变量</span></div>
<div style="left:618px;top:688px;width:118px;height:25px;background:linear-gradient(#d8d8d8,#c8c8c8);border:1px solid #8a8a8a;border-bottom:none"></div>
<div class="t" style="left:618px;top:688px;width:118px;height:24px;line-height:24px;padding-left:14px;font-size:16.2px;color:#6e6e6e;"><span class="c">系统常数</span></div>
<div style="left:738px;top:688px;width:78px;height:25px;background:linear-gradient(#d8d8d8,#c8c8c8);border:1px solid #8a8a8a;border-bottom:none"></div>
<div class="t" style="left:738px;top:688px;width:78px;height:24px;line-height:24px;padding-left:14px;font-size:16.2px;color:#6e6e6e;"><span class="c">文本</span></div>
<div style="left:428px;top:713px;width:247px;height:281px;background:#f0f0f0"></div>
<div style="left:428px;top:741px;width:247px;height:1px;background:#e8e8e8"></div>
<div style="left:428px;top:765px;width:247px;height:1px;background:#e8e8e8"></div>
<div style="left:428px;top:789px;width:247px;height:1px;background:#e8e8e8"></div>
<div style="left:428px;top:812px;width:247px;height:1px;background:#e8e8e8"></div>
<div style="left:428px;top:836px;width:247px;height:1px;background:#e8e8e8"></div>
<div style="left:428px;top:860px;width:247px;height:1px;background:#e8e8e8"></div>
<div style="left:428px;top:883px;width:247px;height:1px;background:#e8e8e8"></div>
<div style="left:428px;top:907px;width:247px;height:1px;background:#e8e8e8"></div>
<div style="left:428px;top:931px;width:247px;height:1px;background:#e8e8e8"></div>
<div style="left:428px;top:954px;width:247px;height:1px;background:#e8e8e8"></div>
<div style="left:428px;top:978px;width:247px;height:1px;background:#e8e8e8"></div>
<div style="left:428px;top:1001px;width:247px;height:1px;background:#e8e8e8"></div>
<svg style="left:433px;top:727px;" width="10" height="7" viewBox="0 0 10 7"><path d="M0 1h10L5 6.500z" fill="#111"/></svg>
<div class="t" style="left:451px;top:717.6px;height:24px;line-height:24px;font-size:13.2px;color:#111;"><span class="c">常规</span></div>
<div class="t" style="left:470.5px;top:741.24px;height:24px;line-height:24px;font-size:13.2px;color:#111;"><span class="c">目录信息</span></div>
<svg style="left:433px;top:774px;" width="10" height="7" viewBox="0 0 10 7"><path d="M0 1h10L5 6.500z" fill="#111"/></svg>
<div class="t" style="left:451px;top:764.88px;height:24px;line-height:24px;font-size:13.2px;color:#111;word-spacing:-2px">PROFINET <span class="c">接口</span> [X1]</div>
<div class="t" style="left:470.5px;top:788.52px;height:24px;line-height:24px;font-size:13.2px;color:#111;"><span class="c">常规</span></div>
<div style="left:469px;top:813px;width:78.5px;height:22px;background:#2a5fd8;border:1px dotted #e0e0ff"></div>
<div class="t" style="left:470.5px;top:812.1600000000001px;height:24px;line-height:24px;font-size:13.2px;color:#fff;"><span class="c">以太网地址</span></div>
<svg style="left:454px;top:845px;" width="10" height="7" viewBox="0 0 10 7"><path d="M0 1h10L5 6.500z" fill="#111"/></svg>
<div class="t" style="left:470.5px;top:835.8000000000001px;height:24px;line-height:24px;font-size:13.2px;color:#111;"><span class="c">高级选项</span></div>
<svg style="left:474px;top:868px;" width="10" height="7" viewBox="0 0 10 7"><path d="M0 1h10L5 6.500z" fill="#111"/></svg>
<div class="t" style="left:490px;top:859.44px;height:24px;line-height:24px;font-size:13.2px;color:#111;"><span class="c">实时设定</span></div>
<div class="t" style="left:511px;top:883.08px;height:24px;line-height:24px;font-size:13.2px;color:#111;">IO <span class="c">周期</span></div>
<div style="left:675px;top:713px;width:10px;height:4px;background:#ebebeb"></div>
<div style="left:675px;top:716.5px;width:10px;height:278px;background:#dadada;border:1px solid #8e8e8e;border-bottom:none;box-shadow:inset 1px 0 0 #f0f0f0"></div>
<div style="left:676px;top:818.5px;width:8px;height:30px;background:linear-gradient(#a8a8a8,#e2e2e2 70%);border:1.2px solid #a0a0a0;border-width:1.2px 0"></div>
<div style="left:676px;top:861px;width:8px;height:30px;background:linear-gradient(#a8a8a8,#e2e2e2 70%);border:1.2px solid #a0a0a0;border-width:1.2px 0"></div>
<svg style="left:677px;top:830px;" width="6" height="8" viewBox="0 0 6 8"><path d="M5 0v8L0 4z" fill="#111"/></svg>
<svg style="left:678px;top:872px;" width="6" height="8" viewBox="0 0 6 8"><path d="M0 0v8l5-4z" fill="#111"/></svg>
<div class="t" style="left:702px;top:730.0px;height:24px;line-height:24px;font-size:15.7px;color:#222;"><span class="c">以太网地址</span></div>
<div style="left:804px;top:748.2px;width:765px;height:1.2px;background:#111"></div>
<div style="left:700px;top:762px;width:869px;height:119px;background:#cfcfcf"></div>
<div class="t" style="left:719px;top:766.0px;height:24px;line-height:24px;font-size:16.0px;color:#000;font-weight:bold;"><span class="c">接口连接到</span></div>
<div class="t" style="left:847px;top:813px;width:100px;height:24px;line-height:24px;text-align:right;font-size:13.2px;color:#222"><span class="c">子网<span style="margin-left:3.5px;position:relative;top:-3px">：</span></span></div>
<div style="left:955px;top:815px;width:599px;height:21px;background:#fff;border:1px solid #8a8a8a"></div>
<div class="t" style="left:962px;top:813.5px;height:24px;line-height:24px;font-size:13.2px;color:#111;">PN/IE_1</div>
<div style="left:1533px;top:816px;width:20px;height:19px;background:linear-gradient(#f6f6f6,#dcdcdc);border:1px solid #9a9a9a"></div>
<svg style="left:1538px;top:823px;" width="10" height="6" viewBox="0 0 10 6"><path d="M0 0h10L5 5.500z" fill="#111"/></svg>
<div style="left:955px;top:844px;width:210px;height:22px;background:linear-gradient(#f2f2f2,#dadada);border:1px solid #8a8a8a;border-radius:2px"></div>
<div class="t" style="left:955px;top:844px;width:210px;height:22px;line-height:22px;text-align:center;font-size:13.2px;color:#9a9a9a"><span class="c">添加新子网</span></div>
<div style="left:700px;top:889.5px;width:869px;height:105px;background:#cfcfcf"></div>
<div class="t" style="left:719px;top:893.5px;height:24px;line-height:24px;font-size:16.0px;color:#000;font-weight:bold;letter-spacing:-0.3px"><span style="font-weight:normal">IP</span> <span class="c">协议</span></div>
<div class="t" style="left:827px;top:941px;width:120px;height:24px;line-height:24px;text-align:right;font-size:13.2px;color:#222">IP <span class="c">地址<span style="margin-left:3.5px;position:relative;top:-3px">：</span></span></div>
<div style="left:955px;top:942px;width:175px;height:21.5px;background:#fff;border:1px solid #8a8a8a"></div>
<div class="t" style="left:965.5px;top:942.3px;height:24px;line-height:24px;font-size:13.4px;color:#111;word-spacing:3.400px">192 . 168 . 51  . 142</div>
<div class="t" style="left:827px;top:971px;width:120px;height:24px;line-height:24px;text-align:right;font-size:13.2px;color:#222"><span class="c">子网掩码<span style="margin-left:3.5px;position:relative;top:-3px">：</span></span></div>
<div style="left:955px;top:971.5px;width:175px;height:23px;background:#ebebeb;border:1px solid #9a9a9a"></div>
<div class="t" style="left:965.5px;top:972.3px;height:24px;line-height:24px;font-size:13.4px;color:#111;word-spacing:3.300px">255 . 255 . 255 . 0</div>
<div style="left:1576px;top:713px;width:23px;height:281px;background:#c0c0c0;border-left:1px solid #d8d8d8"></div>
<div style="left:1576.5px;top:717.5px;width:22px;height:22px;background:linear-gradient(#ededed,#dcdcdc);border:1px solid #9a9a9a;box-shadow:inset 0 0 0 1px #fbfbfb"></div>
<svg style="left:1577px;top:718px;" width="21" height="21" viewBox="0 0 21 21"><path d="M5.3 13.1l5.2 -5.2 5.2 5.2" fill="none" stroke="#4a4a4a" stroke-width="2.300"/></svg>
<div style="left:1577px;top:740px;width:21px;height:21px;background:linear-gradient(90deg,#eeeeee,#dcdcdc);border:1px solid #9a9a9a;box-shadow:inset 0 0 0 1px #fbfbfb"></div>
<div style="left:1583px;top:746px;width:9px;height:1px;background:#666"></div>
<div style="left:1583px;top:749px;width:9px;height:1px;background:#666"></div>
<div style="left:1583px;top:752px;width:9px;height:1px;background:#666"></div>
<div style="left:1583px;top:755px;width:9px;height:1px;background:#666"></div>
<div style="left:1576.5px;top:971.5px;width:22px;height:22px;background:linear-gradient(#ededed,#dcdcdc);border:1px solid #9a9a9a;box-shadow:inset 0 0 0 1px #fbfbfb"></div>
<svg style="left:1577px;top:972px;" width="21" height="21" viewBox="0 0 21 21"><path d="M5.3 7.9l5.2 5.2 5.2 -5.2" fill="none" stroke="#4a4a4a" stroke-width="2.300"/></svg>
<div style="left:1602.5px;top:92px;width:286.5px;height:30px;background:#ababab"></div>
<div class="t" style="left:1609px;top:94.5px;height:24px;line-height:24px;font-size:16.4px;color:#fff;font-weight:bold;letter-spacing:0.800px"><span class="c">硬件目录</span></div>
<div style="left:1826px;top:100px;width:10px;height:9px;background:#fff"></div>
<div style="left:1822px;top:104px;width:10px;height:10px;background:#fff;border:1px solid #ababab;border-width:1px 1px 0 0"></div>
<div style="left:1846px;top:100px;width:13px;height:13px;border:1.500px solid #d8d8d8;background:linear-gradient(90deg,transparent 0 4px,#d0d0d0 4px 5px,transparent 5px 6.500px,#c8c8c8 6.500px 7.500px,transparent 7.500px 9px,#c0c0c0 9px 10px,transparent 10px)"></div>
<svg style="left:1871px;top:99px;" width="10" height="16" viewBox="0 0 10 16"><path d="M1 1v14l8-7z" fill="#fff"/></svg>
<div style="left:1602.5px;top:122px;width:286.5px;height:3px;background:#e9e9e9"></div>
<div style="left:1602.5px;top:125px;width:286.5px;height:32px;background:linear-gradient(#fbfbfb,#e0e0e0 60%,#d6d6d6)"></div>
<div class="t" style="left:1610px;top:130.0px;height:24px;line-height:24px;font-size:16.4px;color:#000;font-weight:bold;"><span class="c">选项</span></div>
<div style="left:1602.5px;top:156px;width:286.5px;height:1px;background:#8a8a8a"></div>
<div style="left:1602.5px;top:157px;width:286.5px;height:34px;background:#ebebeb"></div>
<svg style="left:1863px;top:163px;" width="20" height="18" viewBox="0 0 20 18"><rect x=".5" y=".5" width="18" height="16" fill="#f4f6ff" stroke="#8a96d8"/><rect x=".5" y=".5" width="18" height="3" fill="#c0c8f0"/><path d="M2 15h15" stroke="#8a96d8" stroke-width="2"/></svg>
<div style="left:1602.5px;top:191px;width:286.5px;height:3px;background:#b8b8b8"></div>
<div style="left:1602.5px;top:194px;width:286.5px;height:26px;background:linear-gradient(#f6f6f6,#dcdcdc)"></div>
<div style="left:1602.5px;top:220px;width:286.5px;height:1px;background:#b0b0b0"></div>
<svg style="left:1609px;top:203px;" width="13" height="9" viewBox="0 0 13 9"><path d="M1.500 1.500l5 5 5-5" fill="none" stroke="#111" stroke-width="2.200"/></svg>
<div style="left:1628px;top:194px;width:1px;height:26px;background:#b4b4b4"></div>
<div style="left:1629px;top:194px;width:1px;height:26px;background:#fafafa"></div>
<div class="t" style="left:1633.5px;top:195.5px;height:24px;line-height:24px;font-size:16.2px;color:#000;font-weight:bold;"><span class="c">目录</span></div>
<div style="left:1602.5px;top:221px;width:286.5px;height:745px;background:#f0f0f0"></div>
<div style="left:1608px;top:227px;width:205px;height:23.5px;background:#fff;border:1px solid #8a8a8a"></div>
<div class="t" style="left:1612px;top:226.5px;height:24px;line-height:24px;font-size:13.2px;color:#222;letter-spacing:-0.9px">&lt;<span class="c">搜索</span>&gt;</div>
<div style="left:1820px;top:227px;width:28px;height:23.5px;background:linear-gradient(#f8f8f8,#d8d8d8);border:1px solid #8a8a8a;border-radius:2.500px"></div>
<div style="left:1855px;top:227px;width:28px;height:23.5px;background:linear-gradient(#f8f8f8,#d8d8d8);border:1px solid #8a8a8a;border-radius:2.500px"></div>
<svg style="left:1824px;top:233px;" width="22" height="12" viewBox="0 0 22 12"><rect x="0" y="3" width="4" height="8" rx="1" fill="#14146a"/><rect x="7" y="3" width="4" height="8" rx="1" fill="#14146a"/><rect x="3.500" y="5" width="4" height="3" fill="#14146a"/><rect x="1" y="0" width="2.500" height="3.500" fill="#14146a"/><rect x="8" y="0" width="2.500" height="3.500" fill="#14146a"/><path d="M16.500 0v9M13 6l3.500 4.500L20 6" stroke="#14146a" stroke-width="2" fill="none"/></svg>
<svg style="left:1859px;top:233px;" width="22" height="12" viewBox="0 0 22 12"><rect x="0" y="3" width="4" height="8" rx="1" fill="#14146a"/><rect x="7" y="3" width="4" height="8" rx="1" fill="#14146a"/><rect x="3.500" y="5" width="4" height="3" fill="#14146a"/><rect x="1" y="0" width="2.500" height="3.500" fill="#14146a"/><rect x="8" y="0" width="2.500" height="3.500" fill="#14146a"/><path d="M16.500 11V2M13 5l3.500-4.500L20 5" stroke="#14146a" stroke-width="2" fill="none"/></svg>
<div style="left:1608px;top:262px;width:18px;height:18px;background:#fff;border:1.500px solid #3a5ad8;border-radius:2.500px"></div>
<svg style="left:1610px;top:264px;" width="14" height="14" viewBox="0 0 14 14"><rect width="14" height="14" fill="#2a6ad8"/><path d="M2.500 7l3.500 3.500 6-7.500" stroke="#fff" stroke-width="2.200" fill="none"/></svg>
<div class="t" style="left:1630.5px;top:258.5px;height:24px;line-height:24px;font-size:13.2px;color:#111;"><span class="c">过滤</span></div>
<div class="t" style="left:1703px;top:258.5px;height:24px;line-height:24px;font-size:13.2px;color:#111;"><span class="c">配置文件</span></div>
<div style="left:1768px;top:259.5px;width:81px;height:21.5px;background:#fff;border:1px solid #8a8a8a"></div>
<div class="t" style="left:1773px;top:258.5px;height:24px;line-height:24px;font-size:13.2px;color:#111;letter-spacing:-0.9px">&lt;<span class="c">全部</span>&gt;</div>
<div style="left:1828px;top:260.5px;width:20px;height:19.5px;background:linear-gradient(#f6f6f6,#dcdcdc);border:1px solid #9a9a9a"></div>
<svg style="left:1833px;top:268px;" width="10" height="6" viewBox="0 0 10 6"><path d="M0 0h10L5 5.500z" fill="#111"/></svg>
<div style="left:1855px;top:259px;width:28px;height:22.5px;background:linear-gradient(#f8f8f8,#d8d8d8);border:1px solid #8a8a8a;border-radius:2.500px"></div>
<svg style="left:1859px;top:261px;" width="21" height="19" viewBox="0 0 21 19"><rect x="1" y="5" width="9" height="10" fill="#c8d8f8" stroke="#2a4ab8"/><rect x="3" y="7" width="3" height="5" fill="#2a4ab8"/><path d="M12 2v5l2 2v8.500h3.500V9l2-2V2h-2v4h-3.500V2z" fill="#1a4ab8"/></svg>
<div style="left:1608px;top:307px;width:275px;height:1px;background:#e7e7e7"></div>
<div style="left:1608px;top:331px;width:275px;height:1px;background:#e7e7e7"></div>
<div style="left:1608px;top:355px;width:275px;height:1px;background:#e7e7e7"></div>
<div style="left:1608px;top:378px;width:275px;height:1px;background:#e7e7e7"></div>
<div style="left:1608px;top:402px;width:275px;height:1px;background:#e7e7e7"></div>
<div style="left:1608px;top:426px;width:275px;height:1px;background:#e7e7e7"></div>
<div style="left:1608px;top:450px;width:275px;height:1px;background:#e7e7e7"></div>
<div style="left:1608px;top:473px;width:275px;height:1px;background:#e7e7e7"></div>
<div style="left:1608px;top:497px;width:275px;height:1px;background:#e7e7e7"></div>
<div style="left:1608px;top:521px;width:275px;height:1px;background:#e7e7e7"></div>
<div style="left:1608px;top:545px;width:275px;height:1px;background:#e7e7e7"></div>
<div style="left:1608px;top:568px;width:275px;height:1px;background:#e7e7e7"></div>
<div style="left:1608px;top:592px;width:275px;height:1px;background:#e7e7e7"></div>
<div style="left:1608px;top:616px;width:275px;height:1px;background:#e7e7e7"></div>
<div style="left:1608px;top:639px;width:275px;height:1px;background:#e7e7e7"></div>
<div style="left:1608px;top:663px;width:275px;height:1px;background:#e7e7e7"></div>
<div style="left:1608px;top:687px;width:275px;height:1px;background:#e7e7e7"></div>
<div style="left:1608px;top:711px;width:275px;height:1px;background:#e7e7e7"></div>
<div style="left:1608px;top:734px;width:275px;height:1px;background:#e7e7e7"></div>
<div style="left:1608px;top:758px;width:275px;height:1px;background:#e7e7e7"></div>
<div style="left:1608px;top:782px;width:275px;height:1px;background:#e7e7e7"></div>
<div style="left:1608px;top:806px;width:275px;height:1px;background:#e7e7e7"></div>
<div style="left:1608px;top:829px;width:275px;height:1px;background:#e7e7e7"></div>
<div style="left:1608px;top:853px;width:275px;height:1px;background:#e7e7e7"></div>
<div style="left:1608px;top:877px;width:275px;height:1px;background:#e7e7e7"></div>
<div style="left:1608px;top:901px;width:275px;height:1px;background:#e7e7e7"></div>
<div style="left:1608px;top:924px;width:275px;height:1px;background:#e7e7e7"></div>
<div style="left:1608px;top:948px;width:275px;height:1px;background:#e7e7e7"></div>
<svg style="left:1613px;top:293px;" width="10" height="7" viewBox="0 0 10 7"><path d="M0 1h10L5 6.500z" fill="#111"/></svg>
<svg style="left:1629px;top:287px;" width="20" height="19" viewBox="0 0 20 19"><path d="M.5 1.500h6.500l1.500 3h9v12H.5z" fill="url(#fg)" stroke="#c9a038"/><path d="M1.500 5.500h15" stroke="#fff3c4" stroke-width="1"/><rect x="7" y="7" width="11" height="11" fill="#3c4458" stroke="#222"/><rect x="8.500" y="8.500" width="3" height="8" fill="#38c8e0"/></svg>
<div class="t" style="left:1652.5px;top:285.29999999999995px;height:24px;line-height:24px;font-size:13.2px;color:#111;"><span class="c">模块</span></div>
<svg style="left:1649px;top:311px;" width="19" height="19" viewBox="0 0 19 19"><rect x="0" y=".3" width="8.800" height="17.200" fill="#7e889c"/><rect x="0" y=".3" width="1.200" height="17.200" fill="#5a6274"/><rect x="2.300" y="1.800" width="3.800" height="14.200" fill="#2ee2f2"/><rect x="2.300" y="1.800" width="1.200" height="14.200" fill="#22b8cc"/><rect x="9" y=".3" width="9.300" height="17.200" fill="url(#md)"/><rect x="0" y="17.300" width="18.600" height="1.500" fill="#3a4252"/></svg>
<div class="t" style="left:1673px;top:309.03px;height:24px;line-height:24px;font-size:13.05px;color:#111;">P2R_IO</div>
<svg style="left:1649px;top:334px;" width="19" height="19" viewBox="0 0 19 19"><rect x="0" y=".3" width="8.800" height="17.200" fill="#7e889c"/><rect x="0" y=".3" width="1.200" height="17.200" fill="#5a6274"/><rect x="2.300" y="1.800" width="3.800" height="14.200" fill="#2ee2f2"/><rect x="2.300" y="1.800" width="1.200" height="14.200" fill="#22b8cc"/><rect x="9" y=".3" width="9.300" height="17.200" fill="url(#md)"/><rect x="0" y="17.300" width="18.600" height="1.500" fill="#3a4252"/></svg>
<div class="t" style="left:1673px;top:332.75999999999993px;height:24px;line-height:24px;font-size:13.05px;color:#111;">P2R_REG1</div>
<svg style="left:1649px;top:358px;" width="19" height="19" viewBox="0 0 19 19"><rect x="0" y=".3" width="8.800" height="17.200" fill="#7e889c"/><rect x="0" y=".3" width="1.200" height="17.200" fill="#5a6274"/><rect x="2.300" y="1.800" width="3.800" height="14.200" fill="#2ee2f2"/><rect x="2.300" y="1.800" width="1.200" height="14.200" fill="#22b8cc"/><rect x="9" y=".3" width="9.300" height="17.200" fill="url(#md)"/><rect x="0" y="17.300" width="18.600" height="1.500" fill="#3a4252"/></svg>
<div class="t" style="left:1673px;top:356.48999999999995px;height:24px;line-height:24px;font-size:13.05px;color:#111;">P2R_REG2</div>
<svg style="left:1649px;top:382px;" width="19" height="19" viewBox="0 0 19 19"><rect x="0" y=".3" width="8.800" height="17.200" fill="#7e889c"/><rect x="0" y=".3" width="1.200" height="17.200" fill="#5a6274"/><rect x="2.300" y="1.800" width="3.800" height="14.200" fill="#2ee2f2"/><rect x="2.300" y="1.800" width="1.200" height="14.200" fill="#22b8cc"/><rect x="9" y=".3" width="9.300" height="17.200" fill="url(#md)"/><rect x="0" y="17.300" width="18.600" height="1.500" fill="#3a4252"/></svg>
<div class="t" style="left:1673px;top:380.21999999999997px;height:24px;line-height:24px;font-size:13.05px;color:#111;">R2P_BIT_REG</div>
<svg style="left:1649px;top:406px;" width="19" height="19" viewBox="0 0 19 19"><rect x="0" y=".3" width="8.800" height="17.200" fill="#7e889c"/><rect x="0" y=".3" width="1.200" height="17.200" fill="#5a6274"/><rect x="2.300" y="1.800" width="3.800" height="14.200" fill="#2ee2f2"/><rect x="2.300" y="1.800" width="1.200" height="14.200" fill="#22b8cc"/><rect x="9" y=".3" width="9.300" height="17.200" fill="url(#md)"/><rect x="0" y="17.300" width="18.600" height="1.500" fill="#3a4252"/></svg>
<div class="t" style="left:1673px;top:403.94999999999993px;height:24px;line-height:24px;font-size:13.05px;color:#111;">R2P_FLOAT_REG</div>
<svg style="left:1649px;top:429px;" width="19" height="19" viewBox="0 0 19 19"><rect x="0" y=".3" width="8.800" height="17.200" fill="#7e889c"/><rect x="0" y=".3" width="1.200" height="17.200" fill="#5a6274"/><rect x="2.300" y="1.800" width="3.800" height="14.200" fill="#2ee2f2"/><rect x="2.300" y="1.800" width="1.200" height="14.200" fill="#22b8cc"/><rect x="9" y=".3" width="9.300" height="17.200" fill="url(#md)"/><rect x="0" y="17.300" width="18.600" height="1.500" fill="#3a4252"/></svg>
<div class="t" style="left:1673px;top:427.67999999999995px;height:24px;line-height:24px;font-size:13.05px;color:#111;">R2P_INT_REG</div>
<svg style="left:1649px;top:453px;" width="19" height="19" viewBox="0 0 19 19"><rect x="0" y=".3" width="8.800" height="17.200" fill="#7e889c"/><rect x="0" y=".3" width="1.200" height="17.200" fill="#5a6274"/><rect x="2.300" y="1.800" width="3.800" height="14.200" fill="#2ee2f2"/><rect x="2.300" y="1.800" width="1.200" height="14.200" fill="#22b8cc"/><rect x="9" y=".3" width="9.300" height="17.200" fill="url(#md)"/><rect x="0" y="17.300" width="18.600" height="1.500" fill="#3a4252"/></svg>
<div class="t" style="left:1673px;top:451.40999999999997px;height:24px;line-height:24px;font-size:13.05px;color:#111;">R2P_IO</div>
<svg style="left:1649px;top:477px;" width="19" height="19" viewBox="0 0 19 19"><rect x="0" y=".3" width="8.800" height="17.200" fill="#7e889c"/><rect x="0" y=".3" width="1.200" height="17.200" fill="#5a6274"/><rect x="2.300" y="1.800" width="3.800" height="14.200" fill="#2ee2f2"/><rect x="2.300" y="1.800" width="1.200" height="14.200" fill="#22b8cc"/><rect x="9" y=".3" width="9.300" height="17.200" fill="url(#md)"/><rect x="0" y="17.300" width="18.600" height="1.500" fill="#3a4252"/></svg>
<div class="t" style="left:1673px;top:475.14px;height:24px;line-height:24px;font-size:13.05px;color:#111;">R2P_Joints</div>
<svg style="left:1649px;top:500px;" width="19" height="19" viewBox="0 0 19 19"><rect x="0" y=".3" width="8.800" height="17.200" fill="#7e889c"/><rect x="0" y=".3" width="1.200" height="17.200" fill="#5a6274"/><rect x="2.300" y="1.800" width="3.800" height="14.200" fill="#2ee2f2"/><rect x="2.300" y="1.800" width="1.200" height="14.200" fill="#22b8cc"/><rect x="9" y=".3" width="9.300" height="17.200" fill="url(#md)"/><rect x="0" y="17.300" width="18.600" height="1.500" fill="#3a4252"/></svg>
<div class="t" style="left:1673px;top:498.86999999999995px;height:24px;line-height:24px;font-size:13.05px;color:#111;">R2P_State</div>
<div style="left:1670px;top:523px;width:57.5px;height:22.5px;background:#c5ccd7"></div>
<svg style="left:1649px;top:524px;" width="19" height="19" viewBox="0 0 19 19"><rect x="0" y=".3" width="8.800" height="17.200" fill="#7e889c"/><rect x="0" y=".3" width="1.200" height="17.200" fill="#5a6274"/><rect x="2.300" y="1.800" width="3.800" height="14.200" fill="#2ee2f2"/><rect x="2.300" y="1.800" width="1.200" height="14.200" fill="#22b8cc"/><rect x="9" y=".3" width="9.300" height="17.200" fill="url(#md)"/><rect x="0" y="17.300" width="18.600" height="1.500" fill="#3a4252"/></svg>
<div class="t" style="left:1673px;top:522.6px;height:24px;line-height:24px;font-size:13.05px;color:#111;">R2P_TCP</div>
<svg style="left:1616px;top:552px;" width="7" height="10" viewBox="0 0 7 10"><path d="M1 0l5.500 5L1 10z" fill="#111"/></svg>
<svg style="left:1629px;top:548px;" width="20" height="19" viewBox="0 0 20 19"><path d="M.5 1.500h6.500l1.500 3h9v12H.5z" fill="url(#fg)" stroke="#c9a038"/><path d="M1.500 5.500h15" stroke="#fff3c4" stroke-width="1"/><rect x="7" y="7" width="11" height="11" fill="#3c4458" stroke="#222"/><rect x="8.500" y="8.500" width="3" height="8" fill="#38c8e0"/></svg>
<div class="t" style="left:1652.5px;top:546.33px;height:24px;line-height:24px;font-size:13.2px;color:#111;"><span class="c">前端模块</span></div>
<div style="left:1602.5px;top:965px;width:286.5px;height:2px;background:#9a9a9a"></div>
<div style="left:1602.5px;top:967px;width:286.5px;height:27px;background:linear-gradient(#f6f6f6,#dcdcdc)"></div>
<svg style="left:1608px;top:974px;" width="9" height="13" viewBox="0 0 9 13"><path d="M1.500 1.500l5 5-5 5" fill="none" stroke="#111" stroke-width="2.200"/></svg>
<div style="left:1628px;top:967px;width:1px;height:27px;background:#b4b4b4"></div>
<div style="left:1629px;top:967px;width:1px;height:27px;background:#fafafa"></div>
<div class="t" style="left:1634px;top:968.5px;height:24px;line-height:24px;font-size:16.2px;color:#000;font-weight:bold;"><span class="c">信息</span></div>
<div style="left:1889px;top:92px;width:1.4px;height:902px;background:#33384e"></div>
<div style="left:1890.4px;top:92px;width:29.6px;height:902px;background:#b2b2b2"></div>
<div style="left:1890.5px;top:130px;width:26px;height:132px;background:linear-gradient(90deg,#f0f0f0,#e0e0e0);border:1px solid #8a8a8a;border-left:none;border-radius:0 2px 2px 0"></div>
<svg style="left:1892px;top:134px;" width="21" height="18" viewBox="0 0 21 18"><path d="M1 2h8v13H1zM11 2h8v13h-8z" fill="#e8ecff" stroke="#3a4ab8"/><rect x="3" y="5" width="4" height="4" fill="#38c8e0"/><rect x="13" y="5" width="4" height="4" fill="#38c8e0"/><path d="M1 16h18" stroke="#3a4ab8" stroke-width="1.500"/></svg>
<div class="t" style="left:1864.0px;top:186.0px;width:78px;height:22px;line-height:22px;transform:rotate(90deg);font-size:16.400px;color:#000;font-weight:bold;text-align:center;letter-spacing:0.200px"><span class="c">硬件目录</span></div>
<div style="left:1890.5px;top:265px;width:26px;height:132px;background:linear-gradient(90deg,#d0d0d0,#c2c2c2);border:1px solid #8a8a8a;border-left:none;border-radius:0 2px 2px 0"></div>
<svg style="left:1892px;top:269px;" width="21" height="18" viewBox="0 0 21 18"><rect x="2.500" y=".5" width="14" height="17" fill="#fff" stroke="#8a8ae0"/><path d="M5.500 3.500v5c0 2 1 3 2.500 3s2.500-1 2.500-3v-5M8 11.500v2c0 1.500 3 1.500 4 0" stroke="#1a1a6a" fill="none" stroke-width="1.400"/><circle cx="12.500" cy="12" r="1.600" fill="#1a1a6a"/></svg>
<div class="t" style="left:1864.5px;top:321.5px;width:77px;height:22px;line-height:22px;transform:rotate(90deg);font-size:16.400px;color:#7a7a7a;font-weight:bold;text-align:center;letter-spacing:0.200px"><span class="c">在线工具</span></div>
<div style="left:1890.5px;top:401px;width:26px;height:91px;background:linear-gradient(90deg,#d0d0d0,#c2c2c2);border:1px solid #8a8a8a;border-left:none;border-radius:0 2px 2px 0"></div>
<svg style="left:1892px;top:405px;" width="21" height="18" viewBox="0 0 21 18"><rect x="3" y="1" width="12" height="15" fill="#fff8e0" stroke="#b89a4a"/><path d="M5 4h8M5 6.500h8M5 9h6" stroke="#2a2a6a"/><path d="M8 12l3.500 4L19 7" stroke="#1a9a1a" stroke-width="2.600" fill="none"/></svg>
<div class="t" style="left:1885.0px;top:436.0px;width:36px;height:22px;line-height:22px;transform:rotate(90deg);font-size:16.400px;color:#7a7a7a;font-weight:bold;text-align:center;letter-spacing:0.200px"><span class="c">任务</span></div>
<div style="left:1890.5px;top:496px;width:26px;height:71px;background:linear-gradient(90deg,#d0d0d0,#c2c2c2);border:1px solid #8a8a8a;border-left:none;border-radius:0 2px 2px 0"></div>
<svg style="left:1892px;top:500px;" width="21" height="18" viewBox="0 0 21 18"><path d="M1 2c3-1 6-1 9 1v13c-3-2-6-2-9-1zM19 2c-3-1-6-1-9 1v13c3-2 6-2 9-1z" fill="#fff" stroke="#2a3ab8" stroke-width="1.500"/></svg>
<div class="t" style="left:1893.0px;top:522.0px;width:20px;height:22px;line-height:22px;transform:rotate(90deg);font-size:16.400px;color:#7a7a7a;font-weight:bold;text-align:center;letter-spacing:0.200px"><span class="c">库</span></div>
<div style="left:0px;top:994px;width:1920px;height:35px;background:#1c1c1c"></div>
<svg style="left:45px;top:1003px;" width="9" height="16" viewBox="0 0 9 16"><path d="M8 0v16L0 8z" fill="#fff"/></svg>
<div class="t" style="left:66.5px;top:999.5px;height:24px;line-height:24px;font-size:13.7px;color:#fff;font-weight:bold;">Portal</div>
<div class="t" style="left:121.5px;top:999.5px;height:24px;line-height:24px;font-size:15.4px;color:#fff;font-weight:bold;letter-spacing:0.800px"><span class="c">视图</span></div>
<div style="left:226px;top:999px;width:88px;height:24px;background:#bdbdbd;border-radius:1px"></div>
<svg style="left:230px;top:1001px;" width="20" height="20" viewBox="0 0 20 20"><rect x="1" y="1" width="18" height="16" fill="#e8ecff" stroke="#5a66a8"/><path d="M1 4.500h18" stroke="#2a3a7a" stroke-width="2"/><path d="M3 8h3M8 8h3M13 8h4M3 11h3M8 11h3M13 11h4M3 14h3M8 14h3M13 14h4" stroke="#e08a20" stroke-width="1.600"/><path d="M5 6v10" stroke="#2a3a7a"/></svg>
<div class="t" style="left:256px;top:999.0px;height:24px;line-height:24px;font-size:13.6px;color:#2a2a2a;"><span class="c">总览</span></div>
<div style="left:318px;top:999px;width:88px;height:24px;background:#f4f4f4;border-radius:1px"></div>
<svg style="left:322px;top:1001px;" width="20" height="20" viewBox="0 0 20 20"><rect x="7.500" y="1" width="5" height="6" fill="#30c8e8" stroke="#286a9a" stroke-width=".8"/><path d="M10 7v3M3.500 13v-3h13v3M10 10v3" stroke="#222" fill="none" stroke-width="1.200"/><rect x="1" y="12.500" width="5" height="6" fill="#30c8e8" stroke="#286a9a" stroke-width=".8"/><rect x="7.500" y="12.500" width="5" height="6" fill="#30c8e8" stroke="#286a9a" stroke-width=".8"/><rect x="14" y="12.500" width="5" height="6" fill="#30c8e8" stroke="#286a9a" stroke-width=".8"/></svg>
<div class="t" style="left:347px;top:999.0px;height:24px;line-height:24px;font-size:12.9px;color:#1a1a1a;">elite-...</div>
<div style="left:409px;top:999px;width:88px;height:24px;background:#bdbdbd;border-radius:1px"></div>
<svg style="left:413px;top:1001px;" width="20" height="20" viewBox="0 0 20 20"><rect x="3" y="1" width="11" height="13" fill="#e8ecff" stroke="#7a86c8"/><path d="M5 4h7M5 6.500h7M5 9h7" stroke="#6a76b8"/><path d="M9 12h10v6H9l-3-3z" fill="#5a2ac8" stroke="#3a1a8a"/></svg>
<div class="t" style="left:438px;top:999.0px;height:24px;line-height:24px;font-size:12.9px;color:#2a2a2a;">Elite...</div>
<div style="left:500px;top:999px;width:88px;height:24px;background:#bdbdbd;border-radius:1px"></div>
<svg style="left:504px;top:1001px;" width="20" height="20" viewBox="0 0 20 20"><path d="M7 1v5l2.500 2.500V18h3V8.500L15 6V1h-2.500v4h-3V1z" fill="#1a5aa8"/></svg>
<div class="t" style="left:530px;top:999.0px;height:24px;line-height:24px;font-size:13.6px;color:#2a2a2a;"><span class="c">设置</span></div>
<div style="left:591px;top:999px;width:88px;height:24px;background:#bdbdbd;border-radius:1px"></div>
<svg style="left:595px;top:1001px;" width="20" height="20" viewBox="0 0 20 20"><rect x="4" y="1" width="13" height="17" fill="#f4f4ff" stroke="#7a7ad0"/><path d="M8 4v11M10.500 5h4M10.500 8h4M10.500 11h4M10.500 14h4" stroke="#2a2a7a" stroke-width="1" stroke-dasharray="1.500 1"/></svg>
<div class="t" style="left:620px;top:999.0px;height:24px;line-height:24px;font-size:12.9px;color:#2a2a2a;">Elite_...</div>
<div style="left:683px;top:999px;width:88px;height:24px;background:#bdbdbd;border-radius:1px"></div>
<svg style="left:687px;top:1001px;" width="20" height="20" viewBox="0 0 20 20"><rect x="1" y="1" width="16" height="12" fill="#fff" stroke="#8a8ab0"/><path d="M3 3.500h3M3 6h2M3 8.500h3" stroke="#d02020" stroke-width="1.600"/><path d="M8 4h7M8 7h7M8 10h7" stroke="#8a8ab0"/><circle cx="5" cy="15.500" r="2.500" fill="none" stroke="#2a3a9a" stroke-width="1.400"/><circle cx="13" cy="15.500" r="2.500" fill="none" stroke="#2a3a9a" stroke-width="1.400"/><path d="M7.500 15.500h3" stroke="#2a3a9a" stroke-width="1.300"/></svg>
<div class="t" style="left:713px;top:999.0px;height:24px;line-height:24px;font-size:13.6px;color:#2a2a2a;"><span class="c">强制表</span></div>
<div style="left:774px;top:999px;width:88px;height:24px;background:#bdbdbd;border-radius:1px"></div>
<svg style="left:778px;top:1001px;" width="20" height="20" viewBox="0 0 20 20"><rect x="4" y="1" width="13" height="17" fill="#f4f4ff" stroke="#7a7ad0"/><path d="M8 4v11M10.500 5h4M10.500 8h4M10.500 11h4M10.500 14h4" stroke="#2a2a7a" stroke-width="1" stroke-dasharray="1.500 1"/></svg>
<div class="t" style="left:803px;top:999.0px;height:24px;line-height:24px;font-size:12.9px;color:#2a2a2a;">Elite_...</div>
<div style="left:865px;top:999px;width:88px;height:24px;background:#bdbdbd;border-radius:1px"></div>
<svg style="left:869px;top:1001px;" width="20" height="20" viewBox="0 0 20 20"><rect x="4" y="1" width="13" height="17" fill="#f4f4ff" stroke="#7a7ad0"/><path d="M8 4v11M10.500 5h4M10.500 8h4M10.500 11h4M10.500 14h4" stroke="#2a2a7a" stroke-width="1" stroke-dasharray="1.500 1"/></svg>
<div class="t" style="left:894px;top:999.0px;height:24px;line-height:24px;font-size:12.9px;color:#2a2a2a;">Elite_...</div>
<div style="left:956px;top:999px;width:88px;height:24px;background:#bdbdbd;border-radius:1px"></div>
<svg style="left:960px;top:1001px;" width="20" height="20" viewBox="0 0 20 20"><rect x="4" y="1" width="13" height="17" fill="#f4f4ff" stroke="#7a7ad0"/><path d="M8 4v11M10.500 5h4M10.500 8h4M10.500 11h4M10.500 14h4" stroke="#2a2a7a" stroke-width="1" stroke-dasharray="1.500 1"/></svg>
<div class="t" style="left:985px;top:999.0px;height:24px;line-height:24px;font-size:12.9px;color:#2a2a2a;">Elite_...</div>
<div style="left:1048px;top:999px;width:88px;height:24px;background:#bdbdbd;border-radius:1px"></div>
<svg style="left:1052px;top:1001px;" width="20" height="20" viewBox="0 0 20 20"><rect x="4" y="1" width="13" height="17" fill="#f4f4ff" stroke="#7a7ad0"/><path d="M8 4v11M10.500 5h4M10.500 8h4M10.500 11h4M10.500 14h4" stroke="#2a2a7a" stroke-width="1" stroke-dasharray="1.500 1"/></svg>
<div class="t" style="left:1077px;top:999.0px;height:24px;line-height:24px;font-size:12.9px;color:#2a2a2a;">Elite_...</div>
<div style="left:1139px;top:999px;width:88px;height:24px;background:#bdbdbd;border-radius:1px"></div>
<svg style="left:1143px;top:1001px;" width="20" height="20" viewBox="0 0 20 20"><rect x="4" y="1" width="13" height="17" fill="#f4f4ff" stroke="#7a7ad0"/><path d="M8 4v11M10.500 5h4M10.500 8h4M10.500 11h4M10.500 14h4" stroke="#2a2a7a" stroke-width="1" stroke-dasharray="1.500 1"/></svg>
<div class="t" style="left:1168px;top:999.0px;height:24px;line-height:24px;font-size:12.9px;color:#2a2a2a;">Elite_...</div>
<div style="left:1230px;top:999px;width:88px;height:24px;background:#bdbdbd;border-radius:1px"></div>
<svg style="left:1234px;top:1001px;" width="20" height="20" viewBox="0 0 20 20"><rect x="4" y="1" width="13" height="17" fill="#f4f4ff" stroke="#7a7ad0"/><path d="M8 4v11M10.500 5h4M10.500 8h4M10.500 11h4M10.500 14h4" stroke="#2a2a7a" stroke-width="1" stroke-dasharray="1.500 1"/></svg>
<div class="t" style="left:1259px;top:999.0px;height:24px;line-height:24px;font-size:12.9px;color:#2a2a2a;">Elite_...</div>
<div style="left:1321px;top:999px;width:88px;height:24px;background:#bdbdbd;border-radius:1px"></div>
<svg style="left:1325px;top:1001px;" width="20" height="20" viewBox="0 0 20 20"><rect x="5" y="4" width="10" height="10" fill="#a020c8" stroke="#5a0a7a"/><path d="M1 9h4M15 9h4" stroke="#a020c8" stroke-width="2.400"/><rect x="8" y="7.500" width="4" height="3" fill="#e8c8f8"/></svg>
<div class="t" style="left:1350px;top:999.0px;height:24px;line-height:24px;font-size:12.9px;color:#2a2a2a;">Main ...</div>
<svg style="left:1453px;top:1001px;" width="23" height="21" viewBox="0 0 23 21"><rect x=".5" y=".5" width="21" height="19" fill="#c8c8c8" stroke="#8a8a8a"/><path d="M3 4h8M3 7h8M3 10h6" stroke="#555"/><path d="M3 16h16" stroke="#222" stroke-width="3" stroke-dasharray="4 2"/><path d="M17 12V5M14 8l3-3.500L20 8" stroke="#14146a" stroke-width="1.800" fill="none"/></svg>
<div style="left:1483px;top:997px;width:1px;height:30px;background:#555"></div>
<svg style="left:1490px;top:1002px;" width="19" height="19" viewBox="0 0 19 19"><circle cx="9.500" cy="9.500" r="9" fill="#1a3ae8"/><path d="M4.500 9.500l3.500 4 6.500-8" stroke="#fff" stroke-width="2.400" fill="none"/></svg>
<div class="t" style="left:1515px;top:999.5px;height:24px;line-height:24px;font-size:13.2px;color:#f0f0f0;">PROFINET <span style="font-size:15px;letter-spacing:1.400px;margin-left:2px">设备名称</span>“elite-dev1”<span style="font-size:15px;letter-spacing:1.400px">已成功</span>...</div>
<svg style="left:1874px;top:1001px;" width="24" height="22" viewBox="0 0 24 22"><path d="M2 18c6 2 14-2 18-12l-5 1c-1 6-7 10-13 11z" fill="#8a8a8a"/><path d="M6 4l8 7-3 6z" fill="#b0b0b0" stroke="#666" stroke-width=".6"/><path d="M14 3c4 0 7 3 7 7" stroke="#9a9a9a" fill="none" stroke-width="1.500"/></svg>
</body></html>
